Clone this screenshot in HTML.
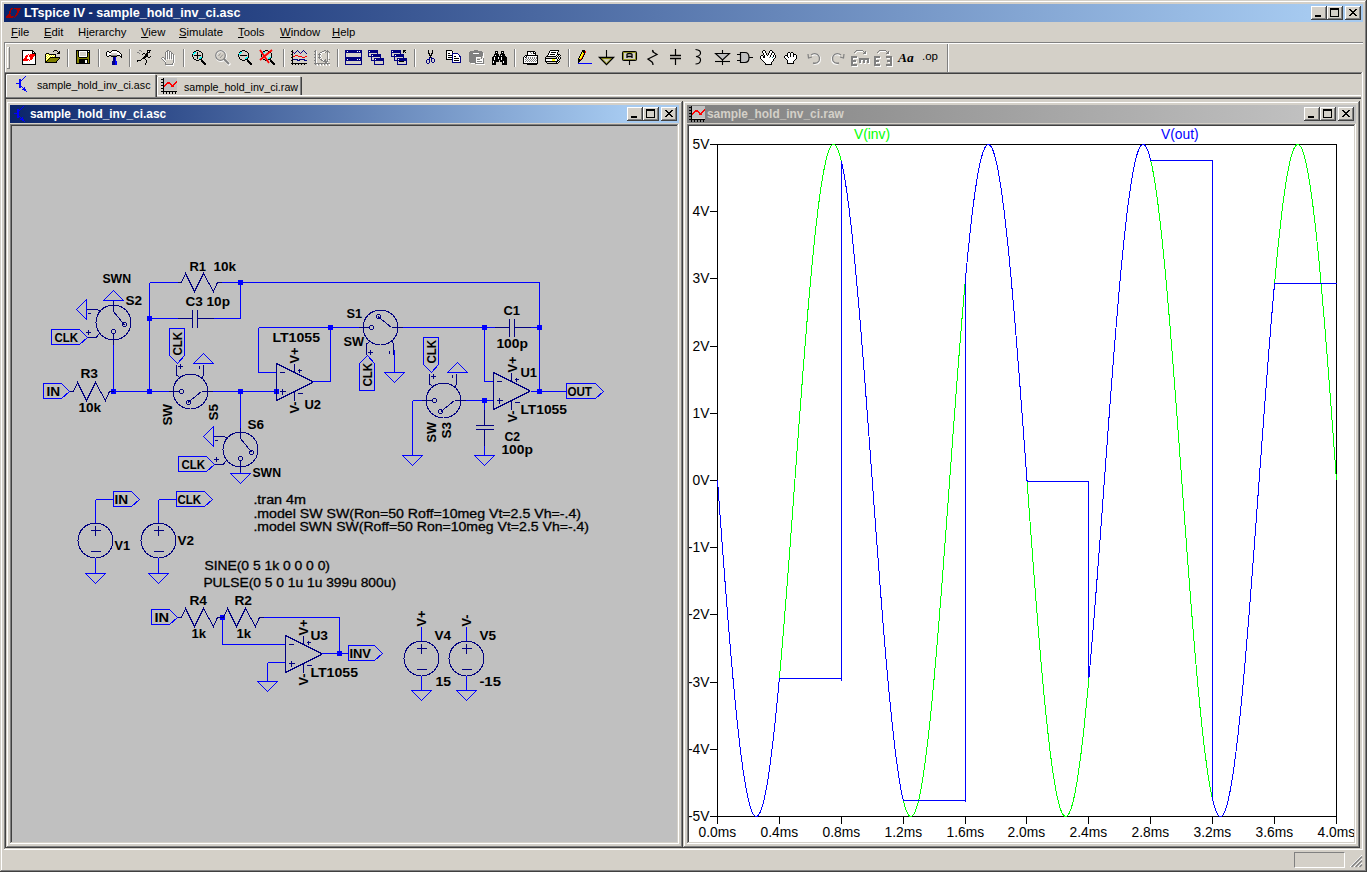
<!DOCTYPE html>
<html><head><meta charset="utf-8"><title>LTspice IV - sample_hold_inv_ci.asc</title>
<style>
html,body{margin:0;padding:0}
body{width:1367px;height:872px;overflow:hidden;background:#D4D0C8;position:relative;font-family:'Liberation Sans', sans-serif}
body>div{position:absolute}
u{text-decoration:underline}
</style></head><body>
<div style="left:0px;top:0px;width:1366px;height:1px;background:#D4D0C8;"></div><div style="left:0px;top:0px;width:1px;height:871px;background:#D4D0C8;"></div><div style="left:1px;top:1px;width:1364px;height:1px;background:#FFFFFF;"></div><div style="left:1px;top:1px;width:1px;height:869px;background:#FFFFFF;"></div><div style="left:0px;top:871px;width:1367px;height:1px;background:#404040;"></div><div style="left:1366px;top:0px;width:1px;height:872px;background:#404040;"></div><div style="left:1px;top:870px;width:1365px;height:1px;background:#808080;"></div><div style="left:1365px;top:1px;width:1px;height:870px;background:#808080;"></div><div style="left:4px;top:4px;width:1359px;height:18px;background:linear-gradient(to right,#0A246A 0px,#A6CAF0 1305px,#A6CAF0 100%);"></div><svg style="position:absolute;left:4px;top:8px" width="17" height="10" shape-rendering="crispEdges"><path d="M7 0h2v1h-2zM10 0h7v1h-7zM6 1h2v1h-2zM12 1h4v1h-4zM6 2h1v1h-1zM13 2h3v1h-3zM5 3h2v1h-2zM13 3h2v1h-2zM5 4h2v1h-2zM13 4h2v1h-2zM5 5h1v1h-1zM12 5h2v1h-2zM4 6h3v1h-3zM12 6h2v1h-2zM3 7h4v1h-4zM11 7h2v1h-2zM2 8h8v1h-8zM11 8h1v1h-1zM2 9h7v1h-7zM10 9h1v1h-1z" fill="#A00000"/></svg><div style="left:24px;top:7px;font:bold 12.6px 'Liberation Sans', sans-serif;color:#fff;white-space:pre;line-height:1;">LTspice IV - sample_hold_inv_ci.asc</div><div style="left:1311px;top:6px;width:15px;height:1px;background:#FFFFFF;"></div><div style="left:1311px;top:6px;width:1px;height:13px;background:#FFFFFF;"></div><div style="left:1311px;top:19px;width:16px;height:1px;background:#404040;"></div><div style="left:1326px;top:6px;width:1px;height:14px;background:#404040;"></div><div style="left:1312px;top:7px;width:13px;height:1px;background:#D4D0C8;"></div><div style="left:1312px;top:7px;width:1px;height:11px;background:#D4D0C8;"></div><div style="left:1312px;top:18px;width:14px;height:1px;background:#808080;"></div><div style="left:1325px;top:7px;width:1px;height:12px;background:#808080;"></div><div style="left:1313px;top:8px;width:12px;height:10px;background:#D4D0C8;"></div><div style="left:1315px;top:15px;width:6px;height:2px;background:#000;"></div><div style="left:1327px;top:6px;width:15px;height:1px;background:#FFFFFF;"></div><div style="left:1327px;top:6px;width:1px;height:13px;background:#FFFFFF;"></div><div style="left:1327px;top:19px;width:16px;height:1px;background:#404040;"></div><div style="left:1342px;top:6px;width:1px;height:14px;background:#404040;"></div><div style="left:1328px;top:7px;width:13px;height:1px;background:#D4D0C8;"></div><div style="left:1328px;top:7px;width:1px;height:11px;background:#D4D0C8;"></div><div style="left:1328px;top:18px;width:14px;height:1px;background:#808080;"></div><div style="left:1341px;top:7px;width:1px;height:12px;background:#808080;"></div><div style="left:1329px;top:8px;width:12px;height:10px;background:#D4D0C8;"></div><div style="left:1330px;top:8px;width:9px;height:9px;background:transparent;box-sizing:border-box;border:1px solid #000;border-top-width:2px"></div><div style="left:1345px;top:6px;width:15px;height:1px;background:#FFFFFF;"></div><div style="left:1345px;top:6px;width:1px;height:13px;background:#FFFFFF;"></div><div style="left:1345px;top:19px;width:16px;height:1px;background:#404040;"></div><div style="left:1360px;top:6px;width:1px;height:14px;background:#404040;"></div><div style="left:1346px;top:7px;width:13px;height:1px;background:#D4D0C8;"></div><div style="left:1346px;top:7px;width:1px;height:11px;background:#D4D0C8;"></div><div style="left:1346px;top:18px;width:14px;height:1px;background:#808080;"></div><div style="left:1359px;top:7px;width:1px;height:12px;background:#808080;"></div><div style="left:1347px;top:8px;width:12px;height:10px;background:#D4D0C8;"></div><svg style="position:absolute;left:1345px;top:6px" width="16" height="14"><path d="M4.5 3.5 L11 10 M5 3.5 L11.5 10 M11 3.5 L4.5 10 M11.5 3.5 L5 10" stroke="#000" stroke-width="1.1" shape-rendering="crispEdges"/></svg><div style="left:11px;top:27px;font:normal 11.3px 'Liberation Sans', sans-serif;color:#000;white-space:pre;line-height:1;text-underline-offset:1px"><u>F</u>ile</div><div style="left:44px;top:27px;font:normal 11.3px 'Liberation Sans', sans-serif;color:#000;white-space:pre;line-height:1;text-underline-offset:1px"><u>E</u>dit</div><div style="left:78px;top:27px;font:normal 11.3px 'Liberation Sans', sans-serif;color:#000;white-space:pre;line-height:1;text-underline-offset:1px">H<u>i</u>erarchy</div><div style="left:141px;top:27px;font:normal 11.3px 'Liberation Sans', sans-serif;color:#000;white-space:pre;line-height:1;text-underline-offset:1px"><u>V</u>iew</div><div style="left:179px;top:27px;font:normal 11.3px 'Liberation Sans', sans-serif;color:#000;white-space:pre;line-height:1;text-underline-offset:1px"><u>S</u>imulate</div><div style="left:238px;top:27px;font:normal 11.3px 'Liberation Sans', sans-serif;color:#000;white-space:pre;line-height:1;text-underline-offset:1px"><u>T</u>ools</div><div style="left:280px;top:27px;font:normal 11.3px 'Liberation Sans', sans-serif;color:#000;white-space:pre;line-height:1;text-underline-offset:1px"><u>W</u>indow</div><div style="left:332px;top:27px;font:normal 11.3px 'Liberation Sans', sans-serif;color:#000;white-space:pre;line-height:1;text-underline-offset:1px"><u>H</u>elp</div><div style="left:4px;top:42px;width:1359px;height:1px;background:#808080;"></div><div style="left:5px;top:43px;width:1358px;height:1px;background:#FFFFFF;"></div><div style="left:4px;top:42px;width:1px;height:30px;background:#808080;"></div><div style="left:5px;top:43px;width:1px;height:29px;background:#FFFFFF;"></div><div style="left:7px;top:47px;width:1px;height:22px;background:#FFFFFF;"></div><div style="left:7px;top:47px;width:3px;height:1px;background:#FFFFFF;"></div><div style="left:9px;top:47px;width:1px;height:22px;background:#808080;"></div><div style="left:7px;top:68px;width:3px;height:1px;background:#808080;"></div><div style="left:67px;top:49px;width:1px;height:18px;background:#808080;"></div><div style="left:68px;top:49px;width:1px;height:18px;background:#FFFFFF;"></div><div style="left:98px;top:49px;width:1px;height:18px;background:#808080;"></div><div style="left:99px;top:49px;width:1px;height:18px;background:#FFFFFF;"></div><div style="left:129px;top:49px;width:1px;height:18px;background:#808080;"></div><div style="left:130px;top:49px;width:1px;height:18px;background:#FFFFFF;"></div><div style="left:183px;top:49px;width:1px;height:18px;background:#808080;"></div><div style="left:184px;top:49px;width:1px;height:18px;background:#FFFFFF;"></div><div style="left:283px;top:49px;width:1px;height:18px;background:#808080;"></div><div style="left:284px;top:49px;width:1px;height:18px;background:#FFFFFF;"></div><div style="left:337px;top:49px;width:1px;height:18px;background:#808080;"></div><div style="left:338px;top:49px;width:1px;height:18px;background:#FFFFFF;"></div><div style="left:414px;top:49px;width:1px;height:18px;background:#808080;"></div><div style="left:415px;top:49px;width:1px;height:18px;background:#FFFFFF;"></div><div style="left:514px;top:49px;width:1px;height:18px;background:#808080;"></div><div style="left:515px;top:49px;width:1px;height:18px;background:#FFFFFF;"></div><div style="left:568px;top:49px;width:1px;height:18px;background:#808080;"></div><div style="left:569px;top:49px;width:1px;height:18px;background:#FFFFFF;"></div><div style="left:947px;top:44px;width:1px;height:28px;background:#808080;"></div><div style="left:948px;top:44px;width:1px;height:28px;background:#FFFFFF;"></div><svg style="position:absolute;left:20px;top:50px" width="16" height="15" shape-rendering="crispEdges"><path d="M2 0h11v1h-11zM2 1h1v1h-1zM12 1h2v1h-2zM2 2h1v1h-1zM12 2h1v1h-1zM14 2h1v1h-1zM2 3h1v1h-1zM12 3h4v1h-4zM2 4h1v1h-1zM15 4h1v1h-1zM2 5h1v1h-1zM15 5h1v1h-1zM2 6h1v1h-1zM15 6h1v1h-1zM2 7h1v1h-1zM15 7h1v1h-1zM2 8h1v1h-1zM15 8h1v1h-1zM2 9h1v1h-1zM15 9h1v1h-1zM2 10h1v1h-1zM15 10h1v1h-1zM2 11h1v1h-1zM15 11h1v1h-1zM2 12h1v1h-1zM15 12h1v1h-1zM2 13h1v1h-1zM15 13h1v1h-1zM2 14h14v1h-14z" fill="#000000"/><path d="M3 1h9v1h-9zM3 2h9v1h-9zM13 2h1v1h-1zM3 3h9v1h-9zM3 4h5v1h-5zM9 4h1v1h-1zM3 5h3v1h-3zM8 5h1v1h-1zM3 6h2v1h-2zM8 6h1v1h-1zM14 6h1v1h-1zM3 7h2v1h-2zM7 7h3v1h-3zM13 7h2v1h-2zM3 8h1v1h-1zM7 8h3v1h-3zM13 8h2v1h-2zM9 9h1v1h-1zM12 9h3v1h-3zM8 10h1v1h-1zM10 10h5v1h-5zM3 11h12v1h-12zM3 12h12v1h-12zM3 13h12v1h-12z" fill="#FFFFFF"/><path d="M8 4h1v1h-1zM10 4h5v1h-5zM6 5h2v1h-2zM9 5h6v1h-6zM5 6h3v1h-3zM9 6h5v1h-5zM5 7h2v1h-2zM10 7h3v1h-3zM4 8h3v1h-3zM10 8h3v1h-3zM3 9h6v1h-6zM10 9h2v1h-2zM3 10h5v1h-5zM9 10h1v1h-1z" fill="#FF0000"/></svg><svg style="position:absolute;left:42px;top:50px" width="18" height="13" shape-rendering="crispEdges"><path d="M12 0h3v1h-3zM11 1h1v1h-1zM15 1h1v1h-1zM17 1h1v1h-1zM16 2h2v1h-2zM4 3h3v1h-3zM15 3h3v1h-3zM3 4h1v1h-1zM7 4h7v1h-7zM3 5h1v1h-1zM13 5h1v1h-1zM3 6h1v1h-1zM13 6h1v1h-1zM3 7h1v1h-1zM8 7h10v1h-10zM3 8h1v1h-1zM7 8h1v1h-1zM17 8h1v1h-1zM3 9h1v1h-1zM6 9h1v1h-1zM16 9h1v1h-1zM3 10h1v1h-1zM5 10h1v1h-1zM15 10h1v1h-1zM3 11h2v1h-2zM14 11h1v1h-1zM3 12h12v1h-12z" fill="#000000"/><path d="M4 4h1v1h-1zM6 4h1v1h-1zM5 5h1v1h-1zM7 5h1v1h-1zM9 5h1v1h-1zM11 5h1v1h-1zM4 6h1v1h-1zM6 6h1v1h-1zM8 6h1v1h-1zM10 6h1v1h-1zM12 6h1v1h-1zM5 7h1v1h-1zM7 7h1v1h-1zM4 8h1v1h-1zM6 8h1v1h-1zM5 9h1v1h-1zM4 10h1v1h-1z" fill="#FFFF00"/><path d="M5 4h1v1h-1zM4 5h1v1h-1zM6 5h1v1h-1zM8 5h1v1h-1zM10 5h1v1h-1zM12 5h1v1h-1zM5 6h1v1h-1zM7 6h1v1h-1zM9 6h1v1h-1zM11 6h1v1h-1zM4 7h1v1h-1zM6 7h1v1h-1zM5 8h1v1h-1zM4 9h1v1h-1z" fill="#FFFFFF"/><path d="M8 8h9v1h-9zM7 9h9v1h-9zM6 10h9v1h-9zM5 11h9v1h-9z" fill="#808000"/></svg><svg style="position:absolute;left:73px;top:50px" width="17" height="14" shape-rendering="crispEdges"><path d="M3 0h14v1h-14zM3 1h1v1h-1zM5 1h1v1h-1zM14 1h1v1h-1zM16 1h1v1h-1zM3 2h1v1h-1zM5 2h1v1h-1zM14 2h3v1h-3zM3 3h1v1h-1zM5 3h1v1h-1zM14 3h1v1h-1zM16 3h1v1h-1zM3 4h1v1h-1zM5 4h1v1h-1zM14 4h1v1h-1zM16 4h1v1h-1zM3 5h1v1h-1zM5 5h1v1h-1zM14 5h1v1h-1zM16 5h1v1h-1zM3 6h1v1h-1zM5 6h1v1h-1zM14 6h1v1h-1zM16 6h1v1h-1zM3 7h1v1h-1zM6 7h8v1h-8zM16 7h1v1h-1zM3 8h1v1h-1zM16 8h1v1h-1zM3 9h1v1h-1zM6 9h9v1h-9zM16 9h1v1h-1zM3 10h1v1h-1zM6 10h6v1h-6zM14 10h1v1h-1zM16 10h1v1h-1zM3 11h1v1h-1zM6 11h6v1h-6zM14 11h1v1h-1zM16 11h1v1h-1zM3 12h1v1h-1zM6 12h6v1h-6zM14 12h1v1h-1zM16 12h1v1h-1zM3 13h14v1h-14z" fill="#000000"/><path d="M4 1h1v1h-1zM4 2h1v1h-1zM4 3h1v1h-1zM15 3h1v1h-1zM4 4h1v1h-1zM15 4h1v1h-1zM4 5h1v1h-1zM15 5h1v1h-1zM4 6h1v1h-1zM15 6h1v1h-1zM4 7h2v1h-2zM14 7h2v1h-2zM4 8h12v1h-12zM4 9h2v1h-2zM15 9h1v1h-1zM4 10h2v1h-2zM15 10h1v1h-1zM4 11h2v1h-2zM15 11h1v1h-1zM4 12h2v1h-2zM15 12h1v1h-1z" fill="#808000"/><path d="M6 1h8v1h-8zM15 1h1v1h-1zM6 2h1v1h-1zM13 2h1v1h-1zM6 3h1v1h-1zM13 3h1v1h-1zM6 4h1v1h-1zM13 4h1v1h-1zM6 5h1v1h-1zM13 5h1v1h-1zM6 6h8v1h-8zM12 10h2v1h-2zM12 11h2v1h-2zM12 12h2v1h-2z" fill="#FFFFFF"/><path d="M7 2h6v1h-6zM7 3h6v1h-6zM7 4h6v1h-6zM7 5h6v1h-6z" fill="#D4D0C8"/></svg><svg style="position:absolute;left:104px;top:50px" width="20" height="15" shape-rendering="crispEdges"><path d="M8 0h5v1h-5zM3 1h2v1h-2zM7 1h1v1h-1zM13 1h2v1h-2zM2 2h1v1h-1zM5 2h2v1h-2zM15 2h1v1h-1zM2 3h1v1h-1zM16 3h1v1h-1zM2 4h1v1h-1zM17 4h1v1h-1zM2 5h1v1h-1zM5 5h2v1h-2zM13 5h3v1h-3zM17 5h1v1h-1zM3 6h2v1h-2zM7 6h6v1h-6zM16 6h2v1h-2zM17 7h1v1h-1z" fill="#000000"/><path d="M8 1h5v1h-5zM3 2h2v1h-2zM7 2h8v1h-8zM3 3h4v1h-4zM13 3h3v1h-3zM3 4h4v1h-4zM13 4h4v1h-4zM3 5h2v1h-2zM16 5h1v1h-1z" fill="#FFFFFF"/><path d="M7 3h6v1h-6zM7 4h6v1h-6z" fill="#D4D0C8"/><path d="M7 5h6v1h-6z" fill="#808080"/><path d="M9 7h2v1h-2zM9 8h2v1h-2zM9 9h2v1h-2zM9 10h2v1h-2zM8 11h3v1h-3zM8 12h3v1h-3zM8 13h3v1h-3zM8 14h3v1h-3z" fill="#000080"/><path d="M11 7h1v1h-1zM11 8h1v1h-1zM11 9h1v1h-1zM11 10h1v1h-1zM11 11h2v1h-2zM11 12h2v1h-2zM11 13h2v1h-2zM11 14h2v1h-2z" fill="#0000FF"/></svg><svg style="position:absolute;left:134px;top:50px" width="20" height="15" shape-rendering="crispEdges"><path d="M5 0h2v1h-2zM7 1h1v1h-1zM3 2h2v1h-2zM5 3h1v1h-1z" fill="#808080"/><path d="M13 0h4v1h-4zM13 1h1v1h-1zM15 1h1v1h-1zM13 2h3v1h-3zM9 3h2v1h-2zM12 3h2v1h-2zM8 4h1v1h-1zM11 4h3v1h-3zM11 5h3v1h-3zM10 6h4v1h-4zM16 6h1v1h-1zM9 7h3v1h-3zM14 7h2v1h-2zM8 8h3v1h-3zM7 9h1v1h-1zM11 9h1v1h-1zM3 10h4v1h-4zM12 10h1v1h-1zM3 11h1v1h-1zM12 11h1v1h-1zM12 12h1v1h-1zM11 13h1v1h-1zM11 14h1v1h-1z" fill="#000000"/><path d="M14 1h1v1h-1z" fill="#FFFFFF"/></svg><svg style="position:absolute;left:158px;top:50px" width="18" height="16" shape-rendering="crispEdges"><path d="M9 0h2v1h-2zM8 1h2v1h-2zM11 1h2v1h-2zM7 2h1v1h-1zM9 2h1v1h-1zM11 2h1v1h-1zM13 2h1v1h-1zM7 3h1v1h-1zM9 3h1v1h-1zM11 3h1v1h-1zM13 3h2v1h-2zM7 4h1v1h-1zM9 4h1v1h-1zM11 4h1v1h-1zM13 4h1v1h-1zM15 4h1v1h-1zM7 5h1v1h-1zM9 5h1v1h-1zM11 5h1v1h-1zM13 5h1v1h-1zM15 5h1v1h-1zM7 6h1v1h-1zM9 6h1v1h-1zM11 6h1v1h-1zM13 6h1v1h-1zM15 6h1v1h-1zM4 7h2v1h-2zM7 7h1v1h-1zM9 7h1v1h-1zM11 7h1v1h-1zM13 7h1v1h-1zM15 7h1v1h-1zM3 8h1v1h-1zM6 8h2v1h-2zM9 8h1v1h-1zM11 8h1v1h-1zM13 8h1v1h-1zM15 8h1v1h-1zM4 9h1v1h-1zM7 9h1v1h-1zM15 9h1v1h-1zM5 10h1v1h-1zM15 10h1v1h-1zM6 11h1v1h-1zM15 11h1v1h-1zM7 12h1v1h-1zM15 12h1v1h-1zM7 13h1v1h-1zM14 13h1v1h-1zM7 14h8v1h-8z" fill="#808080"/><path d="M10 1h1v1h-1zM8 2h1v1h-1zM10 2h1v1h-1zM12 2h1v1h-1zM8 3h1v1h-1zM10 3h1v1h-1zM12 3h1v1h-1zM8 4h1v1h-1zM10 4h1v1h-1zM12 4h1v1h-1zM14 4h1v1h-1zM8 5h1v1h-1zM10 5h1v1h-1zM12 5h1v1h-1zM14 5h1v1h-1zM16 5h1v1h-1zM8 6h1v1h-1zM10 6h1v1h-1zM12 6h1v1h-1zM14 6h1v1h-1zM16 6h1v1h-1zM8 7h1v1h-1zM10 7h1v1h-1zM12 7h1v1h-1zM14 7h1v1h-1zM16 7h1v1h-1zM4 8h2v1h-2zM8 8h1v1h-1zM10 8h1v1h-1zM12 8h1v1h-1zM14 8h1v1h-1zM16 8h1v1h-1zM5 9h1v1h-1zM8 9h1v1h-1zM10 9h1v1h-1zM12 9h1v1h-1zM14 9h1v1h-1zM16 9h1v1h-1zM6 10h1v1h-1zM16 10h1v1h-1zM7 11h1v1h-1zM16 11h1v1h-1zM16 12h1v1h-1zM15 13h1v1h-1zM15 14h1v1h-1zM8 15h8v1h-8z" fill="#FFFFFF"/></svg><svg style="position:absolute;left:190px;top:50px" width="16" height="15" shape-rendering="crispEdges"><path d="M6 0h3v1h-3zM4 1h2v1h-2zM9 1h2v1h-2zM3 2h1v1h-1zM7 2h1v1h-1zM11 2h1v1h-1zM7 3h1v1h-1zM12 3h1v1h-1zM2 4h1v1h-1zM7 4h1v1h-1zM12 4h1v1h-1zM2 5h1v1h-1zM4 5h7v1h-7zM12 5h1v1h-1zM2 6h1v1h-1zM7 6h1v1h-1zM12 6h1v1h-1zM3 7h1v1h-1zM7 7h1v1h-1zM12 7h1v1h-1zM3 8h1v1h-1zM7 8h1v1h-1zM11 8h1v1h-1zM4 9h2v1h-2zM9 9h3v1h-3zM6 10h3v1h-3zM11 10h2v1h-2zM11 11h3v1h-3zM12 12h3v1h-3zM13 13h3v1h-3zM14 14h2v1h-2z" fill="#000000"/><path d="M4 2h2v1h-2zM3 3h2v1h-2zM3 4h1v1h-1zM10 7h2v1h-2zM9 8h2v1h-2z" fill="#00FFFF"/></svg><svg style="position:absolute;left:215px;top:50px;overflow:visible" width="16" height="16" viewBox="0 0 16 16"><circle cx="6" cy="6" r="5" fill="none" stroke="#fff" stroke-width="2"/><path d="M10 10 L15 15" stroke="#fff" stroke-width="2.8"/><circle cx="5.5" cy="5.5" r="4.8" fill="none" stroke="#808080" stroke-width="1.3"/><path d="M9 9 L14 14" stroke="#808080" stroke-width="2"/><path d="M3.5 6 L5.5 3.5 M5 8 L8 4.5" stroke="#808080" stroke-width="0.8"/></svg><svg style="position:absolute;left:236px;top:50px" width="16" height="15" shape-rendering="crispEdges"><path d="M6 0h3v1h-3zM4 1h2v1h-2zM9 1h2v1h-2zM3 2h1v1h-1zM11 2h1v1h-1zM12 3h1v1h-1zM2 4h1v1h-1zM12 4h1v1h-1zM2 5h1v1h-1zM4 5h7v1h-7zM12 5h1v1h-1zM2 6h1v1h-1zM12 6h1v1h-1zM3 7h1v1h-1zM12 7h1v1h-1zM3 8h1v1h-1zM11 8h1v1h-1zM4 9h2v1h-2zM9 9h3v1h-3zM6 10h3v1h-3zM11 10h2v1h-2zM11 11h3v1h-3zM12 12h3v1h-3zM13 13h3v1h-3zM14 14h2v1h-2z" fill="#000000"/><path d="M4 2h2v1h-2zM3 3h2v1h-2zM3 4h1v1h-1zM10 7h2v1h-2zM9 8h2v1h-2z" fill="#00FFFF"/></svg><svg style="position:absolute;left:259px;top:50px" width="16" height="15" shape-rendering="crispEdges"><path d="M6 0h3v1h-3zM4 1h2v1h-2zM9 1h2v1h-2zM3 2h1v1h-1zM11 2h1v1h-1zM12 3h1v1h-1zM2 4h1v1h-1zM12 4h1v1h-1zM2 5h1v1h-1zM12 5h1v1h-1zM2 6h1v1h-1zM12 6h1v1h-1zM3 7h1v1h-1zM12 7h1v1h-1zM3 8h1v1h-1zM11 8h1v1h-1zM4 9h2v1h-2zM9 9h3v1h-3zM6 10h3v1h-3zM11 10h2v1h-2zM11 11h3v1h-3zM12 12h3v1h-3zM13 13h3v1h-3zM14 14h2v1h-2z" fill="#000000"/><path d="M4 2h2v1h-2zM3 3h2v1h-2zM3 4h1v1h-1zM10 7h2v1h-2zM9 8h2v1h-2z" fill="#00FFFF"/></svg><svg style="position:absolute;left:259px;top:49px;overflow:visible" width="16" height="16" viewBox="0 0 16 16"><path d="M1 1 L10 14 M13 1 L1 11" stroke="#f00" stroke-width="1.8"/></svg><svg style="position:absolute;left:289px;top:50px" width="19" height="15" shape-rendering="crispEdges"><path d="M3 0h1v1h-1zM2 1h2v1h-2zM3 2h1v1h-1zM3 3h1v1h-1zM2 4h2v1h-2zM3 5h1v1h-1zM3 6h1v1h-1zM2 7h2v1h-2zM3 8h1v1h-1zM3 9h1v1h-1zM2 10h2v1h-2zM3 11h1v1h-1zM3 12h1v1h-1zM2 13h16v1h-16zM3 14h1v1h-1zM6 14h1v1h-1zM9 14h1v1h-1zM12 14h1v1h-1zM15 14h1v1h-1z" fill="#000000"/><path d="M8 0h1v1h-1zM14 0h1v1h-1zM7 1h1v1h-1zM9 1h1v1h-1zM13 1h1v1h-1zM15 1h1v1h-1zM6 2h1v1h-1zM10 2h1v1h-1zM12 2h1v1h-1zM16 2h1v1h-1zM5 3h1v1h-1zM17 3h1v1h-1zM4 9h5v1h-5zM10 9h6v1h-6zM8 10h3v1h-3zM15 10h3v1h-3z" fill="#000080"/><path d="M4 2h1v1h-1zM11 3h1v1h-1z" fill="#800080"/><path d="M6 5h3v1h-3zM4 6h2v1h-2zM9 6h4v1h-4zM16 6h2v1h-2zM13 7h3v1h-3z" fill="#FF0000"/></svg><svg style="position:absolute;left:312px;top:50px" width="19" height="16" shape-rendering="crispEdges"><path d="M3 0h1v1h-1zM12 0h2v1h-2zM15 0h1v1h-1zM2 1h2v1h-2zM10 1h2v1h-2zM14 1h3v1h-3zM3 2h1v1h-1zM8 2h2v1h-2zM13 2h1v1h-1zM15 2h1v1h-1zM17 2h1v1h-1zM3 3h1v1h-1zM7 3h1v1h-1zM15 3h1v1h-1zM2 4h2v1h-2zM6 4h3v1h-3zM15 4h1v1h-1zM3 5h1v1h-1zM7 5h1v1h-1zM15 5h1v1h-1zM3 6h1v1h-1zM7 6h1v1h-1zM15 6h1v1h-1zM2 7h2v1h-2zM6 7h3v1h-3zM15 7h1v1h-1zM3 8h1v1h-1zM7 8h1v1h-1zM15 8h1v1h-1zM3 9h1v1h-1zM8 9h2v1h-2zM13 9h1v1h-1zM15 9h1v1h-1zM17 9h1v1h-1zM2 10h2v1h-2zM9 10h2v1h-2zM12 10h2v1h-2zM15 10h1v1h-1zM3 11h1v1h-1zM11 11h5v1h-5zM3 12h1v1h-1zM13 12h2v1h-2zM2 13h16v1h-16zM3 14h1v1h-1zM6 14h1v1h-1zM9 14h1v1h-1zM12 14h1v1h-1zM15 14h1v1h-1z" fill="#808080"/><path d="M4 1h1v1h-1zM4 2h1v1h-1zM10 2h3v1h-3zM4 3h1v1h-1zM8 3h2v1h-2zM16 3h1v1h-1zM4 4h1v1h-1zM9 4h1v1h-1zM16 4h1v1h-1zM4 5h1v1h-1zM8 5h1v1h-1zM16 5h1v1h-1zM4 6h1v1h-1zM8 6h1v1h-1zM16 6h1v1h-1zM4 7h1v1h-1zM9 7h1v1h-1zM16 7h1v1h-1zM4 8h1v1h-1zM8 8h1v1h-1zM16 8h1v1h-1zM4 9h1v1h-1zM10 9h1v1h-1zM4 10h1v1h-1zM11 10h1v1h-1zM16 10h1v1h-1zM4 11h1v1h-1zM4 12h1v1h-1zM15 12h1v1h-1zM5 14h1v1h-1zM8 14h1v1h-1zM11 14h1v1h-1zM14 14h1v1h-1zM17 14h1v1h-1zM5 15h1v1h-1zM8 15h1v1h-1zM11 15h1v1h-1zM14 15h1v1h-1zM17 15h1v1h-1z" fill="#FFFFFF"/></svg><svg style="position:absolute;left:345px;top:50px;overflow:visible" width="17" height="15" viewBox="0 0 17 15" shape-rendering="crispEdges"><rect x="0.5" y="0.5" width="16" height="7" fill="#d4d0c8" stroke="#000080"/><rect x="0" y="0" width="17" height="3" fill="#000080"/><rect x="0.5" y="8.5" width="16" height="6" fill="#d4d0c8" stroke="#000080"/><rect x="0" y="8" width="17" height="2.5" fill="#000080"/><rect x="2" y="1" width="1" height="1" fill="#fff"/><rect x="12" y="1" width="1" height="1" fill="#fff"/><rect x="14" y="1" width="1" height="1" fill="#fff"/><rect x="2" y="9" width="1" height="1" fill="#fff"/><rect x="12" y="9" width="1" height="1" fill="#fff"/><rect x="14" y="9" width="1" height="1" fill="#fff"/></svg><svg style="position:absolute;left:368px;top:50px;overflow:visible" width="17" height="15" viewBox="0 0 17 15" shape-rendering="crispEdges"><rect x="0.5" y="0.5" width="9" height="6" fill="#d4d0c8" stroke="#000080"/><rect x="0" y="0" width="10" height="2.5" fill="#000080"/><rect x="1" y="1" width="1" height="1" fill="#fff"/><rect x="3.5" y="4.5" width="9" height="6" fill="#d4d0c8" stroke="#000080"/><rect x="3" y="4" width="10" height="2.5" fill="#000080"/><rect x="4" y="5" width="1" height="1" fill="#fff"/><rect x="6.5" y="8.5" width="9" height="6" fill="#d4d0c8" stroke="#000080"/><rect x="6" y="8" width="10" height="2.5" fill="#000080"/><rect x="7" y="9" width="1" height="1" fill="#fff"/></svg><svg style="position:absolute;left:391px;top:50px;overflow:visible" width="17" height="15" viewBox="0 0 17 15" shape-rendering="crispEdges"><rect x="0.5" y="0.5" width="9" height="6" fill="#d4d0c8" stroke="#000080"/><rect x="0" y="0" width="10" height="2.5" fill="#000080"/><rect x="1" y="1" width="1" height="1" fill="#fff"/><rect x="3.5" y="4.5" width="9" height="6" fill="#d4d0c8" stroke="#000080"/><rect x="3" y="4" width="10" height="2.5" fill="#000080"/><rect x="4" y="5" width="1" height="1" fill="#fff"/><rect x="6.5" y="8.5" width="9" height="6" fill="#d4d0c8" stroke="#000080"/><rect x="6" y="8" width="10" height="2.5" fill="#000080"/><rect x="7" y="9" width="1" height="1" fill="#fff"/><rect x="8" y="11" width="5" height="1" fill="#000"/><path d="M12.5 0.5 L15.5 3.5 M12.5 0.5 V3 M12.5 0.5 H15" stroke="#000" stroke-width="1.2"/></svg><svg style="position:absolute;left:423px;top:50px" width="12" height="14" shape-rendering="crispEdges"><path d="M5 0h1v1h-1zM9 0h1v1h-1zM5 1h1v1h-1zM9 1h1v1h-1zM5 2h1v1h-1zM9 2h1v1h-1zM5 3h2v1h-2zM8 3h2v1h-2zM6 4h1v1h-1zM8 4h1v1h-1zM6 5h3v1h-3zM7 6h1v1h-1zM7 7h1v1h-1z" fill="#000000"/><path d="M6 7h1v1h-1zM8 7h1v1h-1zM6 8h1v1h-1zM8 8h3v1h-3zM4 9h3v1h-3zM8 9h1v1h-1zM11 9h1v1h-1zM3 10h1v1h-1zM6 10h1v1h-1zM8 10h1v1h-1zM11 10h1v1h-1zM3 11h1v1h-1zM6 11h1v1h-1zM8 11h1v1h-1zM11 11h1v1h-1zM3 12h1v1h-1zM6 12h1v1h-1zM9 12h2v1h-2zM4 13h2v1h-2z" fill="#000080"/></svg><svg style="position:absolute;left:444px;top:50px" width="17" height="13" shape-rendering="crispEdges"><path d="M2 0h6v1h-6zM2 1h1v1h-1zM8 1h1v1h-1zM2 2h1v1h-1zM8 2h1v1h-1zM2 3h1v1h-1zM4 3h2v1h-2zM2 4h1v1h-1zM2 5h1v1h-1zM4 5h4v1h-4zM2 6h1v1h-1zM10 6h2v1h-2zM2 7h1v1h-1zM4 7h4v1h-4zM2 8h1v1h-1zM10 8h5v1h-5zM2 9h6v1h-6zM10 10h5v1h-5z" fill="#000000"/><path d="M3 1h5v1h-5zM3 2h5v1h-5zM9 2h1v1h-1zM3 3h1v1h-1zM6 3h2v1h-2zM3 4h5v1h-5zM9 4h5v1h-5zM3 5h1v1h-1zM9 5h6v1h-6zM3 6h5v1h-5zM9 6h1v1h-1zM12 6h3v1h-3zM3 7h1v1h-1zM9 7h7v1h-7zM3 8h5v1h-5zM9 8h1v1h-1zM15 8h1v1h-1zM9 9h7v1h-7zM9 10h1v1h-1zM15 10h1v1h-1zM9 11h7v1h-7z" fill="#FFFFFF"/><path d="M8 3h6v1h-6zM8 4h1v1h-1zM14 4h1v1h-1zM8 5h1v1h-1zM15 5h1v1h-1zM8 6h1v1h-1zM15 6h2v1h-2zM8 7h1v1h-1zM16 7h1v1h-1zM8 8h1v1h-1zM16 8h1v1h-1zM8 9h1v1h-1zM16 9h1v1h-1zM8 10h1v1h-1zM16 10h1v1h-1zM8 11h1v1h-1zM16 11h1v1h-1zM8 12h9v1h-9z" fill="#000080"/></svg><svg style="position:absolute;left:466px;top:50px" width="19" height="15" shape-rendering="crispEdges"><path d="M8 0h4v1h-4zM4 1h12v1h-12zM3 2h14v1h-14zM3 3h4v1h-4zM13 3h4v1h-4zM3 4h14v1h-14zM3 5h14v1h-14zM3 6h13v1h-13zM3 7h7v1h-7zM15 7h1v1h-1zM3 8h7v1h-7zM15 8h1v1h-1zM17 8h1v1h-1zM3 9h7v1h-7zM11 9h3v1h-3zM17 9h1v1h-1zM3 10h7v1h-7zM17 10h1v1h-1zM3 11h7v1h-7zM11 11h5v1h-5zM17 11h1v1h-1zM4 12h6v1h-6zM17 12h1v1h-1zM9 13h9v1h-9z" fill="#808080"/><path d="M7 3h6v1h-6zM17 3h1v1h-1zM17 4h1v1h-1zM17 5h1v1h-1zM17 6h1v1h-1zM10 7h5v1h-5zM17 7h1v1h-1zM10 8h1v1h-1zM16 8h1v1h-1zM10 9h1v1h-1zM14 9h3v1h-3zM10 10h7v1h-7zM10 11h1v1h-1zM16 11h1v1h-1zM10 12h7v1h-7zM5 13h4v1h-4zM10 14h9v1h-9z" fill="#FFFFFF"/><path d="M11 8h4v1h-4z" fill="#D4D0C8"/></svg><svg style="position:absolute;left:489px;top:51px" width="18" height="14" shape-rendering="crispEdges"><path d="M6 0h3v1h-3zM12 0h3v1h-3zM6 1h1v1h-1zM8 1h1v1h-1zM12 1h1v1h-1zM14 1h1v1h-1zM6 2h3v1h-3zM12 2h3v1h-3zM5 3h5v1h-5zM11 3h5v1h-5zM5 4h1v1h-1zM7 4h3v1h-3zM11 4h1v1h-1zM13 4h3v1h-3zM4 5h13v1h-13zM3 6h2v1h-2zM6 6h3v1h-3zM10 6h2v1h-2zM13 6h5v1h-5zM3 7h2v1h-2zM6 7h3v1h-3zM10 7h2v1h-2zM13 7h5v1h-5zM3 8h2v1h-2zM6 8h6v1h-6zM13 8h5v1h-5zM3 9h7v1h-7zM11 9h7v1h-7zM3 10h1v1h-1zM5 10h5v1h-5zM11 10h3v1h-3zM15 10h3v1h-3zM3 11h1v1h-1zM5 11h2v1h-2zM13 11h1v1h-1zM15 11h3v1h-3zM3 12h4v1h-4zM13 12h5v1h-5zM3 13h4v1h-4zM13 13h5v1h-5z" fill="#000000"/><path d="M7 1h1v1h-1zM13 1h1v1h-1zM6 4h1v1h-1zM12 4h1v1h-1zM5 6h1v1h-1zM9 6h1v1h-1zM12 6h1v1h-1zM5 7h1v1h-1zM9 7h1v1h-1zM12 7h1v1h-1zM5 8h1v1h-1zM12 8h1v1h-1zM4 10h1v1h-1zM14 10h1v1h-1zM4 11h1v1h-1zM14 11h1v1h-1z" fill="#FFFFFF"/></svg><svg style="position:absolute;left:520px;top:51px" width="18" height="14" shape-rendering="crispEdges"><path d="M7 0h8v1h-8zM7 1h1v1h-1zM13 1h1v1h-1zM15 1h1v1h-1zM7 2h1v1h-1zM13 2h3v1h-3zM7 3h1v1h-1zM15 3h1v1h-1zM5 4h13v1h-13zM4 5h1v1h-1zM6 5h1v1h-1zM17 5h1v1h-1zM3 6h1v1h-1zM5 6h1v1h-1zM17 6h1v1h-1zM3 7h1v1h-1zM17 7h1v1h-1zM3 8h1v1h-1zM17 8h1v1h-1zM3 9h1v1h-1zM17 9h1v1h-1zM3 10h1v1h-1zM17 10h1v1h-1zM3 11h1v1h-1zM17 11h1v1h-1zM3 12h15v1h-15zM7 13h10v1h-10z" fill="#000000"/><path d="M8 1h2v1h-2zM11 1h2v1h-2zM14 1h1v1h-1zM8 2h3v1h-3zM12 2h1v1h-1zM8 3h7v1h-7zM5 5h1v1h-1zM7 5h10v1h-10zM4 6h1v1h-1zM7 6h1v1h-1zM9 6h1v1h-1zM11 6h1v1h-1zM13 6h1v1h-1zM15 6h1v1h-1zM4 7h2v1h-2zM7 7h1v1h-1zM9 7h1v1h-1zM11 7h1v1h-1zM13 7h1v1h-1zM15 7h1v1h-1zM4 8h1v1h-1zM6 8h1v1h-1zM8 8h1v1h-1zM10 8h1v1h-1zM12 8h1v1h-1zM14 8h1v1h-1zM16 8h1v1h-1zM4 9h2v1h-2zM7 9h1v1h-1zM9 9h1v1h-1zM11 9h1v1h-1zM13 9h1v1h-1zM15 9h1v1h-1zM4 10h1v1h-1zM6 10h1v1h-1zM8 10h1v1h-1zM10 10h1v1h-1zM12 10h1v1h-1zM14 10h1v1h-1zM16 10h1v1h-1zM4 11h13v1h-13z" fill="#FFFFFF"/><path d="M10 1h1v1h-1zM11 2h1v1h-1zM6 6h1v1h-1zM8 6h1v1h-1zM10 6h1v1h-1zM12 6h1v1h-1zM14 6h1v1h-1zM16 6h1v1h-1zM6 7h1v1h-1zM8 7h1v1h-1zM10 7h1v1h-1zM12 7h1v1h-1zM14 7h1v1h-1zM16 7h1v1h-1zM5 8h1v1h-1zM7 8h1v1h-1zM9 8h1v1h-1zM11 8h1v1h-1zM13 8h1v1h-1zM15 8h1v1h-1zM6 9h1v1h-1zM8 9h1v1h-1zM10 9h1v1h-1zM12 9h1v1h-1zM14 9h1v1h-1zM16 9h1v1h-1zM5 10h1v1h-1zM7 10h1v1h-1zM9 10h1v1h-1zM11 10h1v1h-1zM13 10h1v1h-1zM15 10h1v1h-1z" fill="#808080"/></svg><svg style="position:absolute;left:542px;top:50px" width="19" height="14" shape-rendering="crispEdges"><path d="M8 0h9v1h-9zM7 1h1v1h-1zM16 1h1v1h-1zM7 2h1v1h-1zM9 2h5v1h-5zM15 2h1v1h-1zM6 3h1v1h-1zM15 3h1v1h-1zM6 4h1v1h-1zM8 4h5v1h-5zM15 4h3v1h-3zM5 5h1v1h-1zM14 5h1v1h-1zM16 5h1v1h-1zM18 5h1v1h-1zM4 6h10v1h-10zM15 6h1v1h-1zM17 6h1v1h-1zM3 7h1v1h-1zM14 7h1v1h-1zM16 7h1v1h-1zM18 7h1v1h-1zM3 8h12v1h-12zM16 8h1v1h-1zM18 8h1v1h-1zM3 9h1v1h-1zM15 9h1v1h-1zM17 9h1v1h-1zM3 10h1v1h-1zM15 10h2v1h-2zM3 11h13v1h-13zM17 11h1v1h-1zM4 12h1v1h-1zM14 12h1v1h-1zM16 12h1v1h-1zM5 13h11v1h-11z" fill="#000000"/><path d="M8 1h8v1h-8zM8 2h1v1h-1zM14 2h1v1h-1zM7 3h8v1h-8zM7 4h1v1h-1zM13 4h2v1h-2zM6 5h8v1h-8zM15 5h1v1h-1zM17 5h1v1h-1zM14 6h1v1h-1zM16 6h1v1h-1zM15 7h1v1h-1zM17 7h1v1h-1zM15 8h1v1h-1zM4 9h6v1h-6zM13 9h2v1h-2zM16 9h1v1h-1zM4 10h6v1h-6zM13 10h2v1h-2zM16 11h1v1h-1zM15 12h1v1h-1z" fill="#FFFFFF"/><path d="M4 7h10v1h-10zM5 12h9v1h-9z" fill="#D4D0C8"/><path d="M10 9h3v1h-3zM10 10h3v1h-3z" fill="#FFFF00"/></svg><svg style="position:absolute;left:575px;top:50px" width="17" height="14" shape-rendering="crispEdges"><path d="M7 0h3v1h-3zM7 1h3v1h-3zM6 2h1v1h-1zM8 2h2v1h-2zM6 3h1v1h-1zM9 3h1v1h-1zM5 4h1v1h-1zM9 4h1v1h-1zM5 5h1v1h-1zM8 5h1v1h-1zM4 6h1v1h-1zM8 6h1v1h-1zM4 7h1v1h-1zM7 7h1v1h-1zM3 8h1v1h-1zM7 8h1v1h-1zM3 9h2v1h-2zM6 9h1v1h-1zM3 10h3v1h-3zM3 11h2v1h-2zM3 12h1v1h-1z" fill="#000000"/><path d="M10 1h1v1h-1zM10 2h1v1h-1zM8 4h1v1h-1zM7 6h1v1h-1zM6 8h1v1h-1zM5 9h1v1h-1z" fill="#FF0000"/><path d="M7 2h1v1h-1zM7 3h2v1h-2zM6 4h2v1h-2zM6 5h2v1h-2zM5 6h2v1h-2zM5 7h2v1h-2zM4 8h2v1h-2z" fill="#FFFF00"/><path d="M3 13h14v1h-14z" fill="#0000FF"/></svg><svg style="position:absolute;left:599px;top:50px;overflow:visible" width="15" height="16" viewBox="0 0 15 16"><path d="M7.5 0 V7" stroke="#000" stroke-width="1.1"/><path d="M0.5 7.5 H14.5 L7.5 14.5 Z" fill="#d4d0c8" stroke="#000" stroke-width="1.3"/><path d="M2.8 8.6 H12.2 L7.5 13.2 Z" fill="none" stroke="#808000" stroke-width="1"/></svg><svg style="position:absolute;left:622px;top:51px;overflow:visible" width="15" height="15" viewBox="0 0 15 15"><rect x="0.5" y="0.5" width="14" height="9" rx="1.5" fill="#d4d0c8" stroke="#000" stroke-width="1.1"/><rect x="1.5" y="1.5" width="12" height="7" fill="none" stroke="#808000" stroke-width="0.8"/><path d="M5 7 V3.5 Q5 2.5 7.5 2.5 Q10 2.5 10 3.5 V7 M5 5.5 H10" fill="none" stroke="#000" stroke-width="1.3"/><path d="M7.5 10 V14" stroke="#000" stroke-width="1.1"/></svg><svg style="position:absolute;left:647px;top:50px;overflow:visible" width="12" height="16" viewBox="0 0 12 16"><path d="M5 0.5 Q7 1 6 2 L10 4.5 L1 9 L5 12 Q6 13 6 15" fill="none" stroke="#000" stroke-width="1.3"/></svg><svg style="position:absolute;left:670px;top:49px;overflow:visible" width="11" height="16" viewBox="0 0 11 16"><path d="M5.5 0 V6 M5.5 10 V16" stroke="#000" stroke-width="1.2"/><path d="M0 6.5 H11 M0 9.5 H11" stroke="#000" stroke-width="1.6"/></svg><svg style="position:absolute;left:695px;top:49px;overflow:visible" width="7" height="16" viewBox="0 0 7 16"><path d="M0.5 0.5 Q6 1 5.5 4.5 Q5 7 1 7.5 Q6 8 5.5 11.5 Q5 15 0.5 15" fill="none" stroke="#000" stroke-width="1.2"/></svg><svg style="position:absolute;left:715px;top:50px;overflow:visible" width="15" height="15" viewBox="0 0 15 15"><path d="M7.5 0 V15" stroke="#000" stroke-width="1.1"/><path d="M0.5 3.5 H14.5 L7.5 10 Z" fill="#c0c0c0" stroke="#000" stroke-width="1.1"/><path d="M0 11.5 H15" stroke="#000" stroke-width="1.1"/></svg><svg style="position:absolute;left:737px;top:52px;overflow:visible" width="16" height="11" viewBox="0 0 16 11"><path d="M3.5 0.5 H8 Q12 0.5 12 5.5 Q12 10.5 8 10.5 H3.5 Z" fill="#c0c0c0" stroke="#000" stroke-width="1.2"/><path d="M0 2.5 H3 M0 8.5 H3 M12 5.5 H16" stroke="#000" stroke-width="1.1"/></svg><svg style="position:absolute;left:758px;top:50px" width="18" height="15" shape-rendering="crispEdges"><path d="M5 0h2v1h-2zM12 0h2v1h-2zM4 1h1v1h-1zM7 1h1v1h-1zM11 1h1v1h-1zM14 1h1v1h-1zM4 2h1v1h-1zM7 2h1v1h-1zM11 2h1v1h-1zM14 2h2v1h-2zM5 3h1v1h-1zM8 3h1v1h-1zM10 3h1v1h-1zM13 3h1v1h-1zM16 3h1v1h-1zM5 4h1v1h-1zM8 4h1v1h-1zM10 4h1v1h-1zM13 4h1v1h-1zM16 4h1v1h-1zM3 5h2v1h-2zM6 5h1v1h-1zM9 5h1v1h-1zM12 5h1v1h-1zM15 5h1v1h-1zM17 5h1v1h-1zM2 6h1v1h-1zM5 6h2v1h-2zM12 6h1v1h-1zM15 6h1v1h-1zM17 6h1v1h-1zM2 7h1v1h-1zM5 7h2v1h-2zM17 7h1v1h-1zM2 8h1v1h-1zM16 8h1v1h-1zM3 9h1v1h-1zM15 9h1v1h-1zM4 10h1v1h-1zM15 10h1v1h-1zM5 11h1v1h-1zM14 11h1v1h-1zM6 12h1v1h-1zM13 12h1v1h-1zM7 13h1v1h-1zM13 13h1v1h-1zM7 14h7v1h-7z" fill="#000000"/><path d="M5 1h2v1h-2zM12 1h2v1h-2zM5 2h2v1h-2zM12 2h2v1h-2zM6 3h2v1h-2zM11 3h2v1h-2zM14 3h2v1h-2zM6 4h2v1h-2zM11 4h2v1h-2zM14 4h2v1h-2zM7 5h2v1h-2zM10 5h2v1h-2zM13 5h2v1h-2zM16 5h1v1h-1zM3 6h2v1h-2zM7 6h5v1h-5zM13 6h2v1h-2zM16 6h1v1h-1zM3 7h2v1h-2zM7 7h4v1h-4zM12 7h2v1h-2zM15 7h2v1h-2zM3 8h13v1h-13zM4 9h11v1h-11zM5 10h10v1h-10zM6 11h8v1h-8zM7 12h6v1h-6zM8 13h5v1h-5z" fill="#FFFFFF"/><path d="M11 7h1v1h-1z" fill="#808080"/><path d="M14 7h1v1h-1z" fill="#008080"/></svg><svg style="position:absolute;left:781px;top:52px" width="16" height="12" shape-rendering="crispEdges"><path d="M7 0h2v1h-2zM10 0h2v1h-2zM6 1h1v1h-1zM9 1h1v1h-1zM12 1h1v1h-1zM6 2h1v1h-1zM9 2h1v1h-1zM12 2h3v1h-3zM4 3h3v1h-3zM9 3h1v1h-1zM12 3h1v1h-1zM15 3h1v1h-1zM3 4h1v1h-1zM6 4h1v1h-1zM9 4h1v1h-1zM12 4h1v1h-1zM15 4h1v1h-1zM3 5h1v1h-1zM7 5h1v1h-1zM15 5h1v1h-1zM4 6h1v1h-1zM15 6h1v1h-1zM5 7h1v1h-1zM14 7h1v1h-1zM6 8h1v1h-1zM13 8h1v1h-1zM6 9h1v1h-1zM12 9h1v1h-1zM6 10h1v1h-1zM12 10h1v1h-1zM6 11h7v1h-7z" fill="#000000"/><path d="M7 1h2v1h-2zM10 1h2v1h-2zM7 2h2v1h-2zM10 2h2v1h-2zM7 3h2v1h-2zM10 3h2v1h-2zM13 3h2v1h-2zM4 4h2v1h-2zM7 4h2v1h-2zM10 4h2v1h-2zM13 4h2v1h-2zM4 5h3v1h-3zM8 5h7v1h-7zM5 6h10v1h-10zM6 7h8v1h-8zM7 8h6v1h-6zM7 9h5v1h-5zM7 10h5v1h-5z" fill="#FFFFFF"/></svg><svg style="position:absolute;left:807px;top:52px;overflow:visible" width="15" height="13" viewBox="0 0 15 13"><g><path d="M4 3 Q7 0.5 10.5 2.5 Q13.5 5 12 9 Q10 12 6 11" fill="none" stroke="#fff" stroke-width="1.6" transform="translate(0.7 0.7)"/><path d="M4 3 Q7 0.5 10.5 2.5 Q13.5 5 12 9 Q10 12 6 11" fill="none" stroke="#808080" stroke-width="1.3"/><path d="M1 2 L1.5 6 L5 5" fill="none" stroke="#808080" stroke-width="1.2"/></g></svg><svg style="position:absolute;left:830px;top:52px;overflow:visible" width="15" height="13" viewBox="0 0 15 13"><g transform="translate(15 0) scale(-1 1)"><path d="M4 3 Q7 0.5 10.5 2.5 Q13.5 5 12 9 Q10 12 6 11" fill="none" stroke="#fff" stroke-width="1.6" transform="translate(0.7 0.7)"/><path d="M4 3 Q7 0.5 10.5 2.5 Q13.5 5 12 9 Q10 12 6 11" fill="none" stroke="#808080" stroke-width="1.3"/><path d="M1 2 L1.5 6 L5 5" fill="none" stroke="#808080" stroke-width="1.2"/></g></svg><svg style="position:absolute;left:850px;top:49px;overflow:visible" width="20" height="17" viewBox="0 0 20 17" shape-rendering="crispEdges"><g transform="translate(1 1)"><path d="M3.5 4.5 L6.5 1.5 H12.5 L15.5 4.5 M15.5 4.5 V2 M15.5 4.5 H13" fill="none" stroke="#fff" stroke-width="1"/><path d="M6.5 7.5 H2 V15.5 H6.5 M2 11.5 H5.5" fill="none" stroke="#fff" stroke-width="2"/><path d="M9.5 13.5 V9.5 H17.5 V13.5 M13.5 9.5 V13.5" fill="none" stroke="#fff" stroke-width="2"/></g><path d="M3.5 4.5 L6.5 1.5 H12.5 L15.5 4.5 M15.5 4.5 V2 M15.5 4.5 H13" fill="none" stroke="#808080" stroke-width="1"/><path d="M6.5 7.5 H2 V15.5 H6.5 M2 11.5 H5.5" fill="none" stroke="#808080" stroke-width="2"/><path d="M9.5 13.5 V9.5 H17.5 V13.5 M13.5 9.5 V13.5" fill="none" stroke="#808080" stroke-width="2"/></svg><svg style="position:absolute;left:873px;top:49px;overflow:visible" width="20" height="17" viewBox="0 0 20 17" shape-rendering="crispEdges"><g transform="translate(1 1)"><path d="M3.5 4.5 L6.5 1.5 H12.5 L15.5 4.5 M15.5 4.5 V2 M15.5 4.5 H13" fill="none" stroke="#fff" stroke-width="1"/><path d="M6.5 7.5 H2 V15.5 H6.5 M2 11.5 H5.5" fill="none" stroke="#fff" stroke-width="2"/><path d="M13 7.5 H17.5 V15.5 H13 M17.5 11.5 H14" fill="none" stroke="#fff" stroke-width="2"/></g><path d="M3.5 4.5 L6.5 1.5 H12.5 L15.5 4.5 M15.5 4.5 V2 M15.5 4.5 H13" fill="none" stroke="#808080" stroke-width="1"/><path d="M6.5 7.5 H2 V15.5 H6.5 M2 11.5 H5.5" fill="none" stroke="#808080" stroke-width="2"/><path d="M13 7.5 H17.5 V15.5 H13 M17.5 11.5 H14" fill="none" stroke="#808080" stroke-width="2"/></svg><div style="left:898px;top:51px;font:bold 13.5px 'Liberation Sans', sans-serif;color:#000;white-space:pre;line-height:1;font-family:'Liberation Serif',serif"><i>Aa</i></div><div style="left:922px;top:51px;font:normal 11.5px 'Liberation Sans', sans-serif;color:#000;white-space:pre;line-height:1;">.op</div><div style="left:4px;top:72px;width:1358px;height:1px;background:#808080;"></div><div style="left:4px;top:72px;width:1px;height:777px;background:#808080;"></div><div style="left:5px;top:73px;width:1356px;height:1px;background:#404040;"></div><div style="left:5px;top:73px;width:1px;height:775px;background:#404040;"></div><div style="left:4px;top:849px;width:1359px;height:1px;background:#FFFFFF;"></div><div style="left:1362px;top:72px;width:1px;height:778px;background:#FFFFFF;"></div><div style="left:5px;top:848px;width:1357px;height:1px;background:#D4D0C8;"></div><div style="left:1361px;top:73px;width:1px;height:776px;background:#D4D0C8;"></div><div style="left:157px;top:95px;width:1204px;height:1px;background:#FFFFFF;"></div><div style="left:6px;top:97px;width:1355px;height:1px;background:#808080;"></div><div style="left:6px;top:98px;width:1355px;height:1px;background:#404040;"></div><div style="left:7px;top:74px;width:148px;height:1px;background:#FFFFFF;"></div><div style="left:6px;top:75px;width:1px;height:22px;background:#FFFFFF;"></div><div style="left:155px;top:75px;width:1px;height:22px;background:#808080;"></div><div style="left:156px;top:75px;width:1px;height:22px;background:#404040;"></div><svg style="position:absolute;left:10px;top:76px" width="17" height="16" shape-rendering="crispEdges"><path d="M15 0h1v1h-1zM14 1h1v1h-1zM13 2h1v1h-1zM9 3h2v1h-2zM12 3h1v1h-1zM9 4h3v1h-3zM9 5h2v1h-2zM9 6h2v1h-2zM6 7h5v1h-5zM9 8h2v1h-2zM9 9h2v1h-2zM9 10h3v1h-3zM9 11h2v1h-2zM12 11h1v1h-1zM14 11h1v1h-1zM13 12h2v1h-2zM12 13h4v1h-4zM14 14h2v1h-2zM16 15h1v1h-1z" fill="#0000FF"/></svg><div style="left:37px;top:80px;font:normal 10.7px 'Liberation Sans', sans-serif;color:#000;white-space:pre;line-height:1;">sample_hold_inv_ci.asc</div><div style="left:158px;top:76px;width:142px;height:1px;background:#FFFFFF;"></div><div style="left:157px;top:77px;width:1px;height:18px;background:#FFFFFF;"></div><div style="left:300px;top:77px;width:1px;height:18px;background:#808080;"></div><div style="left:301px;top:77px;width:1px;height:18px;background:#404040;"></div><svg style="position:absolute;left:158px;top:78px" width="19" height="16" shape-rendering="crispEdges"><path d="M5 0h1v1h-1zM3 1h3v1h-3zM5 2h1v1h-1zM5 3h1v1h-1zM3 4h3v1h-3zM5 5h1v1h-1zM5 6h1v1h-1zM3 7h3v1h-3zM5 8h1v1h-1zM5 9h1v1h-1zM3 10h3v1h-3zM5 11h1v1h-1zM5 12h1v1h-1zM3 13h16v1h-16zM5 14h1v1h-1zM8 14h1v1h-1zM11 14h1v1h-1zM14 14h1v1h-1zM17 14h1v1h-1zM5 15h1v1h-1zM8 15h1v1h-1zM11 15h1v1h-1zM14 15h1v1h-1zM17 15h1v1h-1z" fill="#000000"/><path d="M6 0h13v1h-13zM6 1h13v1h-13zM6 2h13v1h-13zM6 3h12v1h-12zM6 4h3v1h-3zM12 4h5v1h-5zM6 5h2v1h-2zM13 5h3v1h-3zM18 5h1v1h-1zM6 6h1v1h-1zM9 6h3v1h-3zM14 6h1v1h-1zM17 6h2v1h-2zM8 7h5v1h-5zM16 7h3v1h-3zM7 8h6v1h-6zM16 8h3v1h-3zM6 9h13v1h-13zM6 10h13v1h-13zM6 11h13v1h-13z" fill="#C0C0C0"/><path d="M18 3h1v1h-1zM9 4h3v1h-3zM17 4h2v1h-2zM8 5h5v1h-5zM16 5h2v1h-2zM7 6h2v1h-2zM12 6h2v1h-2zM15 6h2v1h-2zM6 7h2v1h-2zM13 7h3v1h-3zM6 8h1v1h-1zM13 8h3v1h-3z" fill="#FF0000"/><path d="M6 12h13v1h-13z" fill="#D4D0C8"/></svg><div style="left:184px;top:82px;font:normal 10.7px 'Liberation Sans', sans-serif;color:#000;white-space:pre;line-height:1;">sample_hold_inv_ci.raw</div><div style="left:6px;top:101px;width:676px;height:1px;background:#D4D0C8;"></div><div style="left:6px;top:101px;width:1px;height:746px;background:#D4D0C8;"></div><div style="left:6px;top:847px;width:677px;height:1px;background:#404040;"></div><div style="left:682px;top:101px;width:1px;height:747px;background:#404040;"></div><div style="left:7px;top:102px;width:674px;height:1px;background:#FFFFFF;"></div><div style="left:7px;top:102px;width:1px;height:744px;background:#FFFFFF;"></div><div style="left:7px;top:846px;width:675px;height:1px;background:#808080;"></div><div style="left:681px;top:102px;width:1px;height:745px;background:#808080;"></div><div style="left:10px;top:105px;width:669px;height:18px;background:linear-gradient(to right,#0A246A 0px,#A6CAF0 615px,#A6CAF0 100%);"></div><div style="left:10px;top:124px;width:668px;height:1px;background:#808080;"></div><div style="left:10px;top:124px;width:1px;height:719px;background:#808080;"></div><div style="left:10px;top:843px;width:669px;height:1px;background:#FFFFFF;"></div><div style="left:678px;top:124px;width:1px;height:720px;background:#FFFFFF;"></div><div style="left:11px;top:125px;width:666px;height:1px;background:#404040;"></div><div style="left:11px;top:125px;width:1px;height:717px;background:#404040;"></div><div style="left:11px;top:842px;width:667px;height:1px;background:#D4D0C8;"></div><div style="left:677px;top:125px;width:1px;height:718px;background:#D4D0C8;"></div><div style="left:627px;top:107px;width:15px;height:1px;background:#FFFFFF;"></div><div style="left:627px;top:107px;width:1px;height:13px;background:#FFFFFF;"></div><div style="left:627px;top:120px;width:16px;height:1px;background:#404040;"></div><div style="left:642px;top:107px;width:1px;height:14px;background:#404040;"></div><div style="left:628px;top:108px;width:13px;height:1px;background:#D4D0C8;"></div><div style="left:628px;top:108px;width:1px;height:11px;background:#D4D0C8;"></div><div style="left:628px;top:119px;width:14px;height:1px;background:#808080;"></div><div style="left:641px;top:108px;width:1px;height:12px;background:#808080;"></div><div style="left:629px;top:109px;width:12px;height:10px;background:#D4D0C8;"></div><div style="left:631px;top:116px;width:6px;height:2px;background:#000;"></div><div style="left:643px;top:107px;width:15px;height:1px;background:#FFFFFF;"></div><div style="left:643px;top:107px;width:1px;height:13px;background:#FFFFFF;"></div><div style="left:643px;top:120px;width:16px;height:1px;background:#404040;"></div><div style="left:658px;top:107px;width:1px;height:14px;background:#404040;"></div><div style="left:644px;top:108px;width:13px;height:1px;background:#D4D0C8;"></div><div style="left:644px;top:108px;width:1px;height:11px;background:#D4D0C8;"></div><div style="left:644px;top:119px;width:14px;height:1px;background:#808080;"></div><div style="left:657px;top:108px;width:1px;height:12px;background:#808080;"></div><div style="left:645px;top:109px;width:12px;height:10px;background:#D4D0C8;"></div><div style="left:646px;top:109px;width:9px;height:9px;background:transparent;box-sizing:border-box;border:1px solid #000;border-top-width:2px"></div><div style="left:661px;top:107px;width:15px;height:1px;background:#FFFFFF;"></div><div style="left:661px;top:107px;width:1px;height:13px;background:#FFFFFF;"></div><div style="left:661px;top:120px;width:16px;height:1px;background:#404040;"></div><div style="left:676px;top:107px;width:1px;height:14px;background:#404040;"></div><div style="left:662px;top:108px;width:13px;height:1px;background:#D4D0C8;"></div><div style="left:662px;top:108px;width:1px;height:11px;background:#D4D0C8;"></div><div style="left:662px;top:119px;width:14px;height:1px;background:#808080;"></div><div style="left:675px;top:108px;width:1px;height:12px;background:#808080;"></div><div style="left:663px;top:109px;width:12px;height:10px;background:#D4D0C8;"></div><svg style="position:absolute;left:661px;top:107px" width="16" height="14"><path d="M4.5 3.5 L11 10 M5 3.5 L11.5 10 M11 3.5 L4.5 10 M11.5 3.5 L5 10" stroke="#000" stroke-width="1.1" shape-rendering="crispEdges"/></svg><div style="left:12px;top:126px;width:665px;height:716px;background:#C0C0C0;"></div><svg style="position:absolute;left:8px;top:106px" width="17" height="16" shape-rendering="crispEdges"><path d="M15 0h1v1h-1zM14 1h1v1h-1zM13 2h1v1h-1zM9 3h2v1h-2zM12 3h1v1h-1zM9 4h3v1h-3zM9 5h2v1h-2zM9 6h2v1h-2zM6 7h5v1h-5zM9 8h2v1h-2zM9 9h2v1h-2zM9 10h3v1h-3zM9 11h2v1h-2zM12 11h1v1h-1zM14 11h1v1h-1zM13 12h2v1h-2zM12 13h4v1h-4zM14 14h2v1h-2zM16 15h1v1h-1z" fill="#0000FF"/></svg><div style="left:30px;top:109px;font:bold 11.9px 'Liberation Sans', sans-serif;color:#fff;white-space:pre;line-height:1;">sample_hold_inv_ci.asc</div><div style="left:683px;top:101px;width:676px;height:1px;background:#D4D0C8;"></div><div style="left:683px;top:101px;width:1px;height:746px;background:#D4D0C8;"></div><div style="left:683px;top:847px;width:677px;height:1px;background:#404040;"></div><div style="left:1359px;top:101px;width:1px;height:747px;background:#404040;"></div><div style="left:684px;top:102px;width:674px;height:1px;background:#FFFFFF;"></div><div style="left:684px;top:102px;width:1px;height:744px;background:#FFFFFF;"></div><div style="left:684px;top:846px;width:675px;height:1px;background:#808080;"></div><div style="left:1358px;top:102px;width:1px;height:745px;background:#808080;"></div><div style="left:687px;top:105px;width:669px;height:18px;background:linear-gradient(to right,#808080 0px,#C0C0C0 615px,#C0C0C0 100%);"></div><div style="left:687px;top:124px;width:668px;height:1px;background:#808080;"></div><div style="left:687px;top:124px;width:1px;height:719px;background:#808080;"></div><div style="left:687px;top:843px;width:669px;height:1px;background:#FFFFFF;"></div><div style="left:1355px;top:124px;width:1px;height:720px;background:#FFFFFF;"></div><div style="left:688px;top:125px;width:666px;height:1px;background:#404040;"></div><div style="left:688px;top:125px;width:1px;height:717px;background:#404040;"></div><div style="left:688px;top:842px;width:667px;height:1px;background:#D4D0C8;"></div><div style="left:1354px;top:125px;width:1px;height:718px;background:#D4D0C8;"></div><div style="left:1304px;top:107px;width:15px;height:1px;background:#FFFFFF;"></div><div style="left:1304px;top:107px;width:1px;height:13px;background:#FFFFFF;"></div><div style="left:1304px;top:120px;width:16px;height:1px;background:#404040;"></div><div style="left:1319px;top:107px;width:1px;height:14px;background:#404040;"></div><div style="left:1305px;top:108px;width:13px;height:1px;background:#D4D0C8;"></div><div style="left:1305px;top:108px;width:1px;height:11px;background:#D4D0C8;"></div><div style="left:1305px;top:119px;width:14px;height:1px;background:#808080;"></div><div style="left:1318px;top:108px;width:1px;height:12px;background:#808080;"></div><div style="left:1306px;top:109px;width:12px;height:10px;background:#D4D0C8;"></div><div style="left:1308px;top:116px;width:6px;height:2px;background:#000;"></div><div style="left:1320px;top:107px;width:15px;height:1px;background:#FFFFFF;"></div><div style="left:1320px;top:107px;width:1px;height:13px;background:#FFFFFF;"></div><div style="left:1320px;top:120px;width:16px;height:1px;background:#404040;"></div><div style="left:1335px;top:107px;width:1px;height:14px;background:#404040;"></div><div style="left:1321px;top:108px;width:13px;height:1px;background:#D4D0C8;"></div><div style="left:1321px;top:108px;width:1px;height:11px;background:#D4D0C8;"></div><div style="left:1321px;top:119px;width:14px;height:1px;background:#808080;"></div><div style="left:1334px;top:108px;width:1px;height:12px;background:#808080;"></div><div style="left:1322px;top:109px;width:12px;height:10px;background:#D4D0C8;"></div><div style="left:1323px;top:109px;width:9px;height:9px;background:transparent;box-sizing:border-box;border:1px solid #000;border-top-width:2px"></div><div style="left:1338px;top:107px;width:15px;height:1px;background:#FFFFFF;"></div><div style="left:1338px;top:107px;width:1px;height:13px;background:#FFFFFF;"></div><div style="left:1338px;top:120px;width:16px;height:1px;background:#404040;"></div><div style="left:1353px;top:107px;width:1px;height:14px;background:#404040;"></div><div style="left:1339px;top:108px;width:13px;height:1px;background:#D4D0C8;"></div><div style="left:1339px;top:108px;width:1px;height:11px;background:#D4D0C8;"></div><div style="left:1339px;top:119px;width:14px;height:1px;background:#808080;"></div><div style="left:1352px;top:108px;width:1px;height:12px;background:#808080;"></div><div style="left:1340px;top:109px;width:12px;height:10px;background:#D4D0C8;"></div><svg style="position:absolute;left:1338px;top:107px" width="16" height="14"><path d="M4.5 3.5 L11 10 M5 3.5 L11.5 10 M11 3.5 L4.5 10 M11.5 3.5 L5 10" stroke="#000" stroke-width="1.1" shape-rendering="crispEdges"/></svg><div style="left:689px;top:126px;width:665px;height:716px;background:#FFFFFF;"></div><svg style="position:absolute;left:686px;top:106px" width="19" height="16" shape-rendering="crispEdges"><path d="M5 0h1v1h-1zM3 1h3v1h-3zM5 2h1v1h-1zM5 3h1v1h-1zM3 4h3v1h-3zM5 5h1v1h-1zM5 6h1v1h-1zM3 7h3v1h-3zM5 8h1v1h-1zM5 9h1v1h-1zM3 10h3v1h-3zM5 11h1v1h-1zM5 12h1v1h-1zM3 13h16v1h-16zM5 14h1v1h-1zM8 14h1v1h-1zM11 14h1v1h-1zM14 14h1v1h-1zM17 14h1v1h-1zM5 15h1v1h-1zM8 15h1v1h-1zM11 15h1v1h-1zM14 15h1v1h-1zM17 15h1v1h-1z" fill="#000000"/><path d="M6 0h13v1h-13zM6 1h13v1h-13zM6 2h13v1h-13zM6 3h12v1h-12zM6 4h3v1h-3zM12 4h5v1h-5zM6 5h2v1h-2zM13 5h3v1h-3zM18 5h1v1h-1zM6 6h1v1h-1zM9 6h3v1h-3zM14 6h1v1h-1zM17 6h2v1h-2zM8 7h5v1h-5zM16 7h3v1h-3zM7 8h6v1h-6zM16 8h3v1h-3zM6 9h13v1h-13zM6 10h13v1h-13zM6 11h13v1h-13z" fill="#C0C0C0"/><path d="M18 3h1v1h-1zM9 4h3v1h-3zM17 4h2v1h-2zM8 5h5v1h-5zM16 5h2v1h-2zM7 6h2v1h-2zM12 6h2v1h-2zM15 6h2v1h-2zM6 7h2v1h-2zM13 7h3v1h-3zM6 8h1v1h-1zM13 8h3v1h-3z" fill="#FF0000"/><path d="M6 12h13v1h-13z" fill="#D4D0C8"/></svg><div style="left:707px;top:109px;font:bold 11.9px 'Liberation Sans', sans-serif;color:#D4D0C8;white-space:pre;line-height:1;">sample_hold_inv_ci.raw</div><svg style="position:absolute;left:0;top:0" width="1367" height="872" viewBox="0 0 1367 872"><defs><clipPath id="cs"><rect x="12" y="126" width="665" height="716"/></clipPath></defs><g clip-path="url(#cs)" shape-rendering="crispEdges" stroke-width="1"><path d="M149.5 282.5 L177.5 282.5" stroke="#0000FF"/><path d="M221.5 282.5 L539.5 282.5" stroke="#0000FF"/><path d="M149.5 282.5 L149.5 391.5" stroke="#0000FF"/><path d="M149.5 318.5 L177.5 318.5" stroke="#0000FF"/><path d="M213.5 318.5 L240.5 318.5" stroke="#0000FF"/><path d="M240.5 282.5 L240.5 318.5" stroke="#0000FF"/><path d="M113.5 391.5 L168.5 391.5" stroke="#0000FF"/><path d="M212.5 391.5 L276.5 391.5" stroke="#0000FF"/><path d="M113.5 340.5 L113.5 391.5" stroke="#0000FF"/><path d="M240.5 391.5 L240.5 431.5" stroke="#0000FF"/><path d="M258.5 327.5 L258.5 372.5" stroke="#0000FF"/><path d="M258.5 372.5 L276.5 372.5" stroke="#0000FF"/><path d="M258.5 327.5 L330.5 327.5" stroke="#0000FF"/><path d="M330.5 327.5 L330.5 381.5" stroke="#0000FF"/><path d="M312.5 381.5 L330.5 381.5" stroke="#0000FF"/><path d="M330.5 327.5 L358.5 327.5" stroke="#0000FF"/><path d="M402.5 327.5 L494.5 327.5" stroke="#0000FF"/><path d="M530.5 327.5 L539.5 327.5" stroke="#0000FF"/><path d="M539.5 282.5 L539.5 391.5" stroke="#0000FF"/><path d="M484.5 327.5 L484.5 381.5" stroke="#0000FF"/><path d="M484.5 381.5 L493.5 381.5" stroke="#0000FF"/><path d="M394.5 349.5 L394.5 372.5" stroke="#0000FF"/><path d="M412.5 400.5 L421.5 400.5" stroke="#0000FF"/><path d="M412.5 400.5 L412.5 455.5" stroke="#0000FF"/><path d="M465.5 400.5 L493.5 400.5" stroke="#0000FF"/><path d="M484.5 400.5 L484.5 409.5" stroke="#0000FF"/><path d="M484.5 445.5 L484.5 455.5" stroke="#0000FF"/><path d="M530.5 391.5 L566.5 391.5" stroke="#0000FF"/><path d="M113.5 300.5 L113.5 301.5" stroke="#0000FF"/><path d="M95.5 499.5 L95.5 522.5" stroke="#0000FF"/><path d="M95.5 499.5 L113.5 499.5" stroke="#0000FF"/><path d="M95.5 557.5 L95.5 573.5" stroke="#0000FF"/><path d="M158.5 499.5 L158.5 522.5" stroke="#0000FF"/><path d="M158.5 499.5 L176.5 499.5" stroke="#0000FF"/><path d="M158.5 557.5 L158.5 573.5" stroke="#0000FF"/><path d="M222.5 617.5 L222.5 644.5" stroke="#0000FF"/><path d="M222.5 644.5 L285.5 644.5" stroke="#0000FF"/><path d="M263.5 617.5 L339.5 617.5" stroke="#0000FF"/><path d="M339.5 617.5 L339.5 653.5" stroke="#0000FF"/><path d="M321.5 653.5 L348.5 653.5" stroke="#0000FF"/><path d="M267.5 662.5 L285.5 662.5" stroke="#0000FF"/><path d="M267.5 662.5 L267.5 681.5" stroke="#0000FF"/><path d="M421.5 626.5 L421.5 640.5" stroke="#0000FF"/><path d="M421.5 675.5 L421.5 690.5" stroke="#0000FF"/><path d="M466.5 626.5 L466.5 640.5" stroke="#0000FF"/><path d="M466.5 675.5 L466.5 690.5" stroke="#0000FF"/><path d="M240.5 467.5 L240.5 473.5" stroke="#0000FF"/><rect x="111" y="389" width="5" height="5" fill="#0000FF" stroke="none"/><rect x="147" y="389" width="5" height="5" fill="#0000FF" stroke="none"/><rect x="147" y="316" width="5" height="5" fill="#0000FF" stroke="none"/><rect x="238" y="280" width="5" height="5" fill="#0000FF" stroke="none"/><rect x="238" y="389" width="5" height="5" fill="#0000FF" stroke="none"/><rect x="274" y="389" width="5" height="5" fill="#0000FF" stroke="none"/><rect x="328" y="325" width="5" height="5" fill="#0000FF" stroke="none"/><rect x="482" y="325" width="5" height="5" fill="#0000FF" stroke="none"/><rect x="537" y="325" width="5" height="5" fill="#0000FF" stroke="none"/><rect x="482" y="398" width="5" height="5" fill="#0000FF" stroke="none"/><rect x="537" y="389" width="5" height="5" fill="#0000FF" stroke="none"/><rect x="220" y="615" width="5" height="5" fill="#0000FF" stroke="none"/><rect x="337" y="651" width="5" height="5" fill="#0000FF" stroke="none"/><path d="M384.5 372.5 L404.5 372.5 L394.5 382.5 Z" stroke="#0000FF" fill="none"/><path d="M402.5 455.5 L422.5 455.5 L412.5 465.5 Z" stroke="#0000FF" fill="none"/><path d="M474.5 455.5 L494.5 455.5 L484.5 465.5 Z" stroke="#0000FF" fill="none"/><path d="M230.5 473.5 L250.5 473.5 L240.5 483.5 Z" stroke="#0000FF" fill="none"/><path d="M85.5 573.5 L105.5 573.5 L95.5 583.5 Z" stroke="#0000FF" fill="none"/><path d="M148.5 573.5 L168.5 573.5 L158.5 583.5 Z" stroke="#0000FF" fill="none"/><path d="M257.5 681.5 L277.5 681.5 L267.5 691.5 Z" stroke="#0000FF" fill="none"/><path d="M411.5 690.5 L431.5 690.5 L421.5 700.5 Z" stroke="#0000FF" fill="none"/><path d="M456.5 690.5 L476.5 690.5 L466.5 700.5 Z" stroke="#0000FF" fill="none"/><path d="M103.5 300.5 L123.5 300.5 L113.5 290.5 Z" stroke="#0000FF" fill="none"/><path d="M193.5 363.5 L213.5 363.5 L203.5 353.5 Z" stroke="#0000FF" fill="none"/><path d="M447.5 372.5 L467.5 372.5 L457.5 362.5 Z" stroke="#0000FF" fill="none"/><path d="M86.5 299.5 L86.5 319.5 L76.5 309.5 Z" stroke="#0000FF" fill="none"/><path d="M213.5 426.5 L213.5 446.5 L203.5 436.5 Z" stroke="#0000FF" fill="none"/><path d="M177.5 282.5 L181.5 282.5 L185.5 273.5 L194.5 291.5 L203.5 273.5 L213.5 291.5 L217.5 282.5 L221.5 282.5" stroke="#000080" fill="none"/><path d="M69.5 391.5 L73.5 391.5 L77.5 382.5 L86.5 400.5 L95.5 382.5 L105.5 400.5 L109.5 391.5 L113.5 391.5" stroke="#000080" fill="none"/><path d="M177.5 617.5 L181.5 617.5 L185.5 608.5 L194.5 626.5 L203.5 608.5 L213.5 626.5 L217.5 617.5 L221.5 617.5" stroke="#000080" fill="none"/><path d="M219.5 617.5 L223.5 617.5 L227.5 608.5 L236.5 626.5 L245.5 608.5 L255.5 626.5 L259.5 617.5 L263.5 617.5" stroke="#000080" fill="none"/><path d="M177.5 318.5 L192.5 318.5" stroke="#000080"/><path d="M197.5 318.5 L213.5 318.5" stroke="#000080"/><path d="M192.5 309.5 L192.5 327.5" stroke="#000080"/><path d="M197.5 309.5 L197.5 327.5" stroke="#000080"/><path d="M494.5 327.5 L509.5 327.5" stroke="#000080"/><path d="M514.5 327.5 L530.5 327.5" stroke="#000080"/><path d="M509.5 318.5 L509.5 336.5" stroke="#000080"/><path d="M514.5 318.5 L514.5 336.5" stroke="#000080"/><path d="M484.5 409.5 L484.5 425.5" stroke="#000080"/><path d="M484.5 429.5 L484.5 445.5" stroke="#000080"/><path d="M475.5 425.5 L493.5 425.5" stroke="#000080"/><path d="M475.5 429.5 L493.5 429.5" stroke="#000080"/><path d="M276.5 363.5 L312.5 381.5 L312.5 382.5 L276.5 400.5 L276.5 363.5" stroke="#000080" fill="none"/><path d="M294.5 363.5 L294.5 372.5" stroke="#000080"/><path d="M294.5 391.5 L294.5 400.5" stroke="#000080"/><path d="M279.5 372.5 L284.5 372.5" stroke="#000080"/><path d="M279.5 391.5 L285.5 391.5" stroke="#000080"/><path d="M282.5 388.5 L282.5 394.5" stroke="#000080"/><path d="M297.5 370.5 L301.5 370.5" stroke="#000080"/><path d="M299.5 368.5 L299.5 372.5" stroke="#000080"/><path d="M297.5 393.5 L302.5 393.5" stroke="#000080"/><path d="M493.5 372.5 L529.5 390.5 L529.5 391.5 L493.5 409.5 L493.5 372.5" stroke="#000080" fill="none"/><path d="M511.5 372.5 L511.5 381.5" stroke="#000080"/><path d="M511.5 400.5 L511.5 409.5" stroke="#000080"/><path d="M496.5 381.5 L501.5 381.5" stroke="#000080"/><path d="M496.5 400.5 L502.5 400.5" stroke="#000080"/><path d="M499.5 397.5 L499.5 403.5" stroke="#000080"/><path d="M514.5 379.5 L518.5 379.5" stroke="#000080"/><path d="M516.5 377.5 L516.5 381.5" stroke="#000080"/><path d="M514.5 402.5 L519.5 402.5" stroke="#000080"/><path d="M285.5 635.5 L321.5 653.5 L321.5 654.5 L285.5 672.5 L285.5 635.5" stroke="#000080" fill="none"/><path d="M303.5 635.5 L303.5 644.5" stroke="#000080"/><path d="M303.5 663.5 L303.5 672.5" stroke="#000080"/><path d="M288.5 644.5 L293.5 644.5" stroke="#000080"/><path d="M288.5 663.5 L294.5 663.5" stroke="#000080"/><path d="M291.5 660.5 L291.5 666.5" stroke="#000080"/><path d="M306.5 642.5 L310.5 642.5" stroke="#000080"/><path d="M308.5 640.5 L308.5 644.5" stroke="#000080"/><path d="M306.5 665.5 L311.5 665.5" stroke="#000080"/><circle cx="113.5" cy="322.5" r="17.5" stroke="#000080" fill="none"/><path d="M113.5 300.5 L113.5 311.5" stroke="#000080" fill="none"/><path d="M113.5 311.5 L124.5 325" stroke="#000080" fill="none"/><path d="M123 322h3v1h-3z M123 326h3v1h-3z M122 323h1v3h-1z M126 323h1v3h-1z" fill="#000080" stroke="none"/><path d="M112 329h3v1h-3z M112 333h3v1h-3z M111 330h1v3h-1z M115 330h1v3h-1z" fill="#000080" stroke="none"/><path d="M113.5 333 L113.5 344.5" stroke="#000080" fill="none"/><path d="M86.5 309.5 L97.5 309.5 L100 311.5" stroke="#000080" fill="none"/><path d="M86.5 337 L96.5 337 L99.5 333.5" stroke="#000080" fill="none"/><path d="M86 332.5 L91 332.5" stroke="#000080"/><path d="M88.5 330 L88.5 335" stroke="#000080"/><path d="M87.5 313.5 L90.5 313.5" stroke="#000080" fill="none"/><circle cx="240.5" cy="449.5" r="17.5" stroke="#000080" fill="none"/><path d="M240.5 427.5 L240.5 438.5" stroke="#000080" fill="none"/><path d="M240.5 438.5 L251.5 452" stroke="#000080" fill="none"/><path d="M250 450h3v1h-3z M250 454h3v1h-3z M249 451h1v3h-1z M253 451h1v3h-1z" fill="#000080" stroke="none"/><path d="M239 456h3v1h-3z M239 460h3v1h-3z M238 457h1v3h-1z M242 457h1v3h-1z" fill="#000080" stroke="none"/><path d="M240.5 460 L240.5 471.5" stroke="#000080" fill="none"/><path d="M213.5 436.5 L224.5 436.5 L227 438.5" stroke="#000080" fill="none"/><path d="M213.5 464 L223.5 464 L226.5 460.5" stroke="#000080" fill="none"/><path d="M214 459.5 L219 459.5" stroke="#000080"/><path d="M216.5 457 L216.5 462" stroke="#000080"/><path d="M214.5 440.5 L217.5 440.5" stroke="#000080" fill="none"/><circle cx="190.5" cy="391.5" r="17.5" stroke="#000080" fill="none"/><path d="M212.5 391.5 L201.5 391.5" stroke="#000080" fill="none"/><path d="M201.5 391.5 L188 402.5" stroke="#000080" fill="none"/><path d="M187 400h3v1h-3z M187 404h3v1h-3z M186 401h1v3h-1z M190 401h1v3h-1z" fill="#000080" stroke="none"/><path d="M180 389h3v1h-3z M180 393h3v1h-3z M179 390h1v3h-1z M183 390h1v3h-1z" fill="#000080" stroke="none"/><path d="M180 391.5 L168.5 391.5" stroke="#000080" fill="none"/><path d="M203.5 364.5 L203.5 375.5 L201.5 378" stroke="#000080" fill="none"/><path d="M176 364.5 L176 374.5 L179.5 377.5" stroke="#000080" fill="none"/><path d="M178 366.5 L183 366.5" stroke="#000080"/><path d="M180.5 364 L180.5 369" stroke="#000080"/><path d="M199.5 365.5 L199.5 368.5" stroke="#000080" fill="none"/><circle cx="443.5" cy="400.5" r="17.5" stroke="#000080" fill="none"/><path d="M465.5 400.5 L454.5 400.5" stroke="#000080" fill="none"/><path d="M454.5 400.5 L441 411.5" stroke="#000080" fill="none"/><path d="M439 409h3v1h-3z M439 413h3v1h-3z M438 410h1v3h-1z M442 410h1v3h-1z" fill="#000080" stroke="none"/><path d="M433 398h3v1h-3z M433 402h3v1h-3z M432 399h1v3h-1z M436 399h1v3h-1z" fill="#000080" stroke="none"/><path d="M433 400.5 L421.5 400.5" stroke="#000080" fill="none"/><path d="M456.5 373.5 L456.5 384.5 L454.5 387" stroke="#000080" fill="none"/><path d="M429 373.5 L429 383.5 L432.5 386.5" stroke="#000080" fill="none"/><path d="M431 376.5 L436 376.5" stroke="#000080"/><path d="M433.5 374 L433.5 379" stroke="#000080"/><path d="M452.5 374.5 L452.5 377.5" stroke="#000080" fill="none"/><circle cx="380.5" cy="327.5" r="17.5" stroke="#000080" fill="none"/><path d="M402.5 327.5 L391.5 327.5" stroke="#000080" fill="none"/><path d="M391.5 327.5 L378 316.5" stroke="#000080" fill="none"/><path d="M377 314h3v1h-3z M377 318h3v1h-3z M376 315h1v3h-1z M380 315h1v3h-1z" fill="#000080" stroke="none"/><path d="M370 325h3v1h-3z M370 329h3v1h-3z M369 326h1v3h-1z M373 326h1v3h-1z" fill="#000080" stroke="none"/><path d="M370 327.5 L358.5 327.5" stroke="#000080" fill="none"/><path d="M393.5 354.5 L393.5 343.5 L391.5 341" stroke="#000080" fill="none"/><path d="M366 354.5 L366 344.5 L369.5 341.5" stroke="#000080" fill="none"/><path d="M368 352.5 L373 352.5" stroke="#000080"/><path d="M370.5 350 L370.5 355" stroke="#000080"/><path d="M389.5 353.5 L389.5 350.5" stroke="#000080" fill="none"/><circle cx="95.5" cy="540.5" r="17.5" stroke="#000080" fill="none"/><path d="M90.5 530.5 L100.5 530.5" stroke="#000080"/><path d="M95.5 525.5 L95.5 535.5" stroke="#000080"/><path d="M90.5 551.5 L100.5 551.5" stroke="#000080"/><circle cx="158.5" cy="540.5" r="17.5" stroke="#000080" fill="none"/><path d="M153.5 530.5 L163.5 530.5" stroke="#000080"/><path d="M158.5 525.5 L158.5 535.5" stroke="#000080"/><path d="M153.5 551.5 L163.5 551.5" stroke="#000080"/><circle cx="421.5" cy="658.5" r="17.5" stroke="#000080" fill="none"/><path d="M416.5 648.5 L426.5 648.5" stroke="#000080"/><path d="M421.5 643.5 L421.5 653.5" stroke="#000080"/><path d="M416.5 669.5 L426.5 669.5" stroke="#000080"/><circle cx="466.5" cy="658.5" r="17.5" stroke="#000080" fill="none"/><path d="M461.5 648.5 L471.5 648.5" stroke="#000080"/><path d="M466.5 643.5 L466.5 653.5" stroke="#000080"/><path d="M461.5 669.5 L471.5 669.5" stroke="#000080"/><path d="M43.5 383.5 L61.5 383.5 L69.5 391.5 L61.5 398.5 L43.5 398.5 Z" stroke="#0000FF" fill="none"/><text x="46.4" y="396" textLength="13.6" lengthAdjust="spacingAndGlyphs" style="font:bold 12px 'Liberation Sans', sans-serif" fill="#000000" stroke="none">IN</text><path d="M51.5 329.5 L79.5 329.5 L87.5 337.5 L79.5 344.5 L51.5 344.5 Z" stroke="#0000FF" fill="none"/><text x="54.4" y="342" textLength="23.6" lengthAdjust="spacingAndGlyphs" style="font:bold 12px 'Liberation Sans', sans-serif" fill="#000000" stroke="none">CLK</text><path d="M178.5 456.5 L206.5 456.5 L214.5 464.5 L206.5 471.5 L178.5 471.5 Z" stroke="#0000FF" fill="none"/><text x="181.4" y="469" textLength="23.6" lengthAdjust="spacingAndGlyphs" style="font:bold 12px 'Liberation Sans', sans-serif" fill="#000000" stroke="none">CLK</text><path d="M566.5 383.5 L595.5 383.5 L603.5 391.5 L595.5 398.5 L566.5 398.5 Z" stroke="#0000FF" fill="none"/><text x="567.4" y="396" textLength="24.6" lengthAdjust="spacingAndGlyphs" style="font:bold 12px 'Liberation Sans', sans-serif" fill="#000000" stroke="none">OUT</text><path d="M113.5 491.5 L131.5 491.5 L139.5 499.5 L131.5 506.5 L113.5 506.5 Z" stroke="#0000FF" fill="none"/><text x="114.4" y="504" textLength="13.6" lengthAdjust="spacingAndGlyphs" style="font:bold 12px 'Liberation Sans', sans-serif" fill="#000000" stroke="none">IN</text><path d="M176.5 491.5 L204.5 491.5 L212.5 499.5 L204.5 506.5 L176.5 506.5 Z" stroke="#0000FF" fill="none"/><text x="177.4" y="504" textLength="23.6" lengthAdjust="spacingAndGlyphs" style="font:bold 12px 'Liberation Sans', sans-serif" fill="#000000" stroke="none">CLK</text><path d="M151.5 609.5 L169.5 609.5 L177.5 617.5 L169.5 624.5 L151.5 624.5 Z" stroke="#0000FF" fill="none"/><text x="154.4" y="622" textLength="14.6" lengthAdjust="spacingAndGlyphs" style="font:bold 12px 'Liberation Sans', sans-serif" fill="#000000" stroke="none">IN</text><path d="M348.5 645.5 L374.5 645.5 L382.5 653.5 L374.5 660.5 L348.5 660.5 Z" stroke="#0000FF" fill="none"/><text x="349.4" y="658" textLength="21.6" lengthAdjust="spacingAndGlyphs" style="font:bold 12px 'Liberation Sans', sans-serif" fill="#000000" stroke="none">INV</text><path d="M169.5 328.5 L184.5 328.5 L184.5 355.5 L177.5 363.5 L169.5 355.5 Z" stroke="#0000FF" fill="none"/><text x="182" y="355.6" textLength="23.6" lengthAdjust="spacingAndGlyphs" transform="rotate(-90 182 355.6)" style="font:bold 12px 'Liberation Sans', sans-serif" fill="#000000" stroke="none">CLK</text><path d="M423.5 337.5 L438.5 337.5 L438.5 364.5 L431.5 372.5 L423.5 364.5 Z" stroke="#0000FF" fill="none"/><text x="436" y="363.6" textLength="23.6" lengthAdjust="spacingAndGlyphs" transform="rotate(-90 436 363.6)" style="font:bold 12px 'Liberation Sans', sans-serif" fill="#000000" stroke="none">CLK</text><path d="M359.5 390.5 L374.5 390.5 L374.5 363.5 L367.5 355.5 L359.5 363.5 Z" stroke="#0000FF" fill="none"/><text x="372" y="386.6" textLength="23.6" lengthAdjust="spacingAndGlyphs" transform="rotate(-90 372 386.6)" style="font:bold 12px 'Liberation Sans', sans-serif" fill="#000000" stroke="none">CLK</text><text x="102.4" y="283" textLength="28.6" lengthAdjust="spacingAndGlyphs" style="font:bold 12px 'Liberation Sans', sans-serif" fill="#000000" stroke="none">SWN</text><text x="125.4" y="305" textLength="16.6" lengthAdjust="spacingAndGlyphs" style="font:bold 12px 'Liberation Sans', sans-serif" fill="#000000" stroke="none">S2</text><text x="189.4" y="271" textLength="16.6" lengthAdjust="spacingAndGlyphs" style="font:bold 12px 'Liberation Sans', sans-serif" fill="#000000" stroke="none">R1</text><text x="213.4" y="271" textLength="22.6" lengthAdjust="spacingAndGlyphs" style="font:bold 12px 'Liberation Sans', sans-serif" fill="#000000" stroke="none">10k</text><text x="185.4" y="306" textLength="44.6" lengthAdjust="spacingAndGlyphs" style="font:bold 12px 'Liberation Sans', sans-serif" fill="#000000" stroke="none">C3 10p</text><text x="80.4" y="378" textLength="17.6" lengthAdjust="spacingAndGlyphs" style="font:bold 12px 'Liberation Sans', sans-serif" fill="#000000" stroke="none">R3</text><text x="78.4" y="412" textLength="22.6" lengthAdjust="spacingAndGlyphs" style="font:bold 12px 'Liberation Sans', sans-serif" fill="#000000" stroke="none">10k</text><text x="272.4" y="342" textLength="47.6" lengthAdjust="spacingAndGlyphs" style="font:bold 12px 'Liberation Sans', sans-serif" fill="#000000" stroke="none">LT1055</text><text x="304.4" y="409" textLength="16.6" lengthAdjust="spacingAndGlyphs" style="font:bold 12px 'Liberation Sans', sans-serif" fill="#000000" stroke="none">U2</text><text x="346.4" y="318" textLength="15.6" lengthAdjust="spacingAndGlyphs" style="font:bold 12px 'Liberation Sans', sans-serif" fill="#000000" stroke="none">S1</text><text x="343.4" y="346" textLength="20.6" lengthAdjust="spacingAndGlyphs" style="font:bold 12px 'Liberation Sans', sans-serif" fill="#000000" stroke="none">SW</text><text x="503.4" y="315" textLength="16.6" lengthAdjust="spacingAndGlyphs" style="font:bold 12px 'Liberation Sans', sans-serif" fill="#000000" stroke="none">C1</text><text x="496.4" y="348" textLength="31.6" lengthAdjust="spacingAndGlyphs" style="font:bold 12px 'Liberation Sans', sans-serif" fill="#000000" stroke="none">100p</text><text x="520.4" y="377" textLength="16.6" lengthAdjust="spacingAndGlyphs" style="font:bold 12px 'Liberation Sans', sans-serif" fill="#000000" stroke="none">U1</text><text x="520.4" y="414" textLength="46.6" lengthAdjust="spacingAndGlyphs" style="font:bold 12px 'Liberation Sans', sans-serif" fill="#000000" stroke="none">LT1055</text><text x="504.4" y="441" textLength="15.6" lengthAdjust="spacingAndGlyphs" style="font:bold 12px 'Liberation Sans', sans-serif" fill="#000000" stroke="none">C2</text><text x="501.4" y="454" textLength="31.6" lengthAdjust="spacingAndGlyphs" style="font:bold 12px 'Liberation Sans', sans-serif" fill="#000000" stroke="none">100p</text><text x="247.4" y="429" textLength="16.6" lengthAdjust="spacingAndGlyphs" style="font:bold 12px 'Liberation Sans', sans-serif" fill="#000000" stroke="none">S6</text><text x="252.4" y="477" textLength="28.6" lengthAdjust="spacingAndGlyphs" style="font:bold 12px 'Liberation Sans', sans-serif" fill="#000000" stroke="none">SWN</text><text x="114.4" y="550" textLength="15.6" lengthAdjust="spacingAndGlyphs" style="font:bold 12px 'Liberation Sans', sans-serif" fill="#000000" stroke="none">V1</text><text x="177.4" y="545" textLength="16.6" lengthAdjust="spacingAndGlyphs" style="font:bold 12px 'Liberation Sans', sans-serif" fill="#000000" stroke="none">V2</text><text x="189.4" y="605" textLength="17.6" lengthAdjust="spacingAndGlyphs" style="font:bold 12px 'Liberation Sans', sans-serif" fill="#000000" stroke="none">R4</text><text x="191.4" y="638" textLength="14.6" lengthAdjust="spacingAndGlyphs" style="font:bold 12px 'Liberation Sans', sans-serif" fill="#000000" stroke="none">1k</text><text x="234.4" y="605" textLength="17.6" lengthAdjust="spacingAndGlyphs" style="font:bold 12px 'Liberation Sans', sans-serif" fill="#000000" stroke="none">R2</text><text x="236.4" y="638" textLength="14.6" lengthAdjust="spacingAndGlyphs" style="font:bold 12px 'Liberation Sans', sans-serif" fill="#000000" stroke="none">1k</text><text x="310.4" y="640" textLength="17.6" lengthAdjust="spacingAndGlyphs" style="font:bold 12px 'Liberation Sans', sans-serif" fill="#000000" stroke="none">U3</text><text x="310.4" y="677" textLength="47.6" lengthAdjust="spacingAndGlyphs" style="font:bold 12px 'Liberation Sans', sans-serif" fill="#000000" stroke="none">LT1055</text><text x="434.4" y="640" textLength="16.6" lengthAdjust="spacingAndGlyphs" style="font:bold 12px 'Liberation Sans', sans-serif" fill="#000000" stroke="none">V4</text><text x="435.4" y="686" textLength="15.6" lengthAdjust="spacingAndGlyphs" style="font:bold 12px 'Liberation Sans', sans-serif" fill="#000000" stroke="none">15</text><text x="479.4" y="640" textLength="16.6" lengthAdjust="spacingAndGlyphs" style="font:bold 12px 'Liberation Sans', sans-serif" fill="#000000" stroke="none">V5</text><text x="479.4" y="686" textLength="21.6" lengthAdjust="spacingAndGlyphs" style="font:bold 12px 'Liberation Sans', sans-serif" fill="#000000" stroke="none">-15</text><text x="253.4" y="504" textLength="52.6" lengthAdjust="spacingAndGlyphs" style="font:normal 12.5px 'Liberation Sans', sans-serif" fill="#000000" stroke="#000000" stroke-width="0.3">.tran 4m</text><text x="253.4" y="518" textLength="327.6" lengthAdjust="spacingAndGlyphs" style="font:normal 12.5px 'Liberation Sans', sans-serif" fill="#000000" stroke="#000000" stroke-width="0.3">.model SW SW(Ron=50 Roff=10meg Vt=2.5 Vh=-.4)</text><text x="253.4" y="531" textLength="335.6" lengthAdjust="spacingAndGlyphs" style="font:normal 12.5px 'Liberation Sans', sans-serif" fill="#000000" stroke="#000000" stroke-width="0.3">.model SWN SW(Roff=50 Ron=10meg Vt=2.5 Vh=-.4)</text><text x="204.4" y="570" textLength="125.6" lengthAdjust="spacingAndGlyphs" style="font:normal 12.5px 'Liberation Sans', sans-serif" fill="#000000" stroke="#000000" stroke-width="0.3">SINE(0 5 1k 0 0 0 0)</text><text x="203.4" y="587" textLength="192.6" lengthAdjust="spacingAndGlyphs" style="font:normal 12.5px 'Liberation Sans', sans-serif" fill="#000000" stroke="#000000" stroke-width="0.3">PULSE(0 5 0 1u 1u 399u 800u)</text><text x="172" y="425.6" textLength="21.6" lengthAdjust="spacingAndGlyphs" transform="rotate(-90 172 425.6)" style="font:bold 12px 'Liberation Sans', sans-serif" fill="#000000" stroke="none">SW</text><text x="218" y="420.6" textLength="16.6" lengthAdjust="spacingAndGlyphs" transform="rotate(-90 218 420.6)" style="font:bold 12px 'Liberation Sans', sans-serif" fill="#000000" stroke="none">S5</text><text x="436" y="442.6" textLength="20.6" lengthAdjust="spacingAndGlyphs" transform="rotate(-90 436 442.6)" style="font:bold 12px 'Liberation Sans', sans-serif" fill="#000000" stroke="none">SW</text><text x="451" y="438.6" textLength="16.6" lengthAdjust="spacingAndGlyphs" transform="rotate(-90 451 438.6)" style="font:bold 12px 'Liberation Sans', sans-serif" fill="#000000" stroke="none">S3</text><text x="298.5" y="363.5" textLength="16" lengthAdjust="spacingAndGlyphs" transform="rotate(-90 298.5 363.5)" style="font:bold 12px 'Liberation Sans', sans-serif" fill="#000000" stroke="none">V+</text><text x="298.5" y="413.5" textLength="12" lengthAdjust="spacingAndGlyphs" transform="rotate(-90 298.5 413.5)" style="font:bold 12px 'Liberation Sans', sans-serif" fill="#000000" stroke="none">V-</text><text x="516.5" y="372.5" textLength="16" lengthAdjust="spacingAndGlyphs" transform="rotate(-90 516.5 372.5)" style="font:bold 12px 'Liberation Sans', sans-serif" fill="#000000" stroke="none">V+</text><text x="516.5" y="422.5" textLength="12" lengthAdjust="spacingAndGlyphs" transform="rotate(-90 516.5 422.5)" style="font:bold 12px 'Liberation Sans', sans-serif" fill="#000000" stroke="none">V-</text><text x="307.5" y="635.5" textLength="16" lengthAdjust="spacingAndGlyphs" transform="rotate(-90 307.5 635.5)" style="font:bold 12px 'Liberation Sans', sans-serif" fill="#000000" stroke="none">V+</text><text x="307.5" y="685.5" textLength="12" lengthAdjust="spacingAndGlyphs" transform="rotate(-90 307.5 685.5)" style="font:bold 12px 'Liberation Sans', sans-serif" fill="#000000" stroke="none">V-</text><text x="425.5" y="626.5" textLength="16" lengthAdjust="spacingAndGlyphs" transform="rotate(-90 425.5 626.5)" style="font:bold 12px 'Liberation Sans', sans-serif" fill="#000000" stroke="none">V+</text><text x="470.5" y="626.5" textLength="12" lengthAdjust="spacingAndGlyphs" transform="rotate(-90 470.5 626.5)" style="font:bold 12px 'Liberation Sans', sans-serif" fill="#000000" stroke="none">V-</text></g></svg><svg style="position:absolute;left:0;top:0" width="1367" height="872" viewBox="0 0 1367 872"><defs><clipPath id="cp"><rect x="689" y="126" width="665" height="716"/></clipPath></defs><g clip-path="url(#cp)" shape-rendering="crispEdges" stroke-width="1"><path d="M717.5 144.5 H1336.5 V816.5 H717.5 Z" stroke="#000" fill="none"/><path d="M710 144.5 H717" stroke="#000"/><text x="709.5" y="149" text-anchor="end" style="font:13.8px 'Liberation Sans', sans-serif" fill="#000">5V</text><path d="M710 211.5 H717" stroke="#000"/><text x="709.5" y="216" text-anchor="end" style="font:13.8px 'Liberation Sans', sans-serif" fill="#000">4V</text><path d="M710 278.5 H717" stroke="#000"/><text x="709.5" y="283" text-anchor="end" style="font:13.8px 'Liberation Sans', sans-serif" fill="#000">3V</text><path d="M710 346.5 H717" stroke="#000"/><text x="709.5" y="351" text-anchor="end" style="font:13.8px 'Liberation Sans', sans-serif" fill="#000">2V</text><path d="M710 413.5 H717" stroke="#000"/><text x="709.5" y="418" text-anchor="end" style="font:13.8px 'Liberation Sans', sans-serif" fill="#000">1V</text><path d="M710 480.5 H717" stroke="#000"/><text x="709.5" y="485" text-anchor="end" style="font:13.8px 'Liberation Sans', sans-serif" fill="#000">0V</text><path d="M710 547.5 H717" stroke="#000"/><text x="709.5" y="552" text-anchor="end" style="font:13.8px 'Liberation Sans', sans-serif" fill="#000">-1V</text><path d="M710 614.5 H717" stroke="#000"/><text x="709.5" y="619" text-anchor="end" style="font:13.8px 'Liberation Sans', sans-serif" fill="#000">-2V</text><path d="M710 682.5 H717" stroke="#000"/><text x="709.5" y="687" text-anchor="end" style="font:13.8px 'Liberation Sans', sans-serif" fill="#000">-3V</text><path d="M710 749.5 H717" stroke="#000"/><text x="709.5" y="754" text-anchor="end" style="font:13.8px 'Liberation Sans', sans-serif" fill="#000">-4V</text><path d="M710 816.5 H717" stroke="#000"/><text x="709.5" y="821" text-anchor="end" style="font:13.8px 'Liberation Sans', sans-serif" fill="#000">-5V</text><path d="M717.5 817 V824" stroke="#000"/><text x="717.3" y="836.8" text-anchor="middle" style="font:13.8px 'Liberation Sans', sans-serif" fill="#000">0.0ms</text><path d="M779.5 817 V824" stroke="#000"/><text x="779.3" y="836.8" text-anchor="middle" style="font:13.8px 'Liberation Sans', sans-serif" fill="#000">0.4ms</text><path d="M841.5 817 V824" stroke="#000"/><text x="841.3" y="836.8" text-anchor="middle" style="font:13.8px 'Liberation Sans', sans-serif" fill="#000">0.8ms</text><path d="M903.5 817 V824" stroke="#000"/><text x="903.3" y="836.8" text-anchor="middle" style="font:13.8px 'Liberation Sans', sans-serif" fill="#000">1.2ms</text><path d="M965.5 817 V824" stroke="#000"/><text x="965.3" y="836.8" text-anchor="middle" style="font:13.8px 'Liberation Sans', sans-serif" fill="#000">1.6ms</text><path d="M1026.5 817 V824" stroke="#000"/><text x="1026.3" y="836.8" text-anchor="middle" style="font:13.8px 'Liberation Sans', sans-serif" fill="#000">2.0ms</text><path d="M1088.5 817 V824" stroke="#000"/><text x="1088.3" y="836.8" text-anchor="middle" style="font:13.8px 'Liberation Sans', sans-serif" fill="#000">2.4ms</text><path d="M1150.5 817 V824" stroke="#000"/><text x="1150.3" y="836.8" text-anchor="middle" style="font:13.8px 'Liberation Sans', sans-serif" fill="#000">2.8ms</text><path d="M1212.5 817 V824" stroke="#000"/><text x="1212.3" y="836.8" text-anchor="middle" style="font:13.8px 'Liberation Sans', sans-serif" fill="#000">3.2ms</text><path d="M1274.5 817 V824" stroke="#000"/><text x="1274.3" y="836.8" text-anchor="middle" style="font:13.8px 'Liberation Sans', sans-serif" fill="#000">3.6ms</text><path d="M1336.5 817 V824" stroke="#000"/><text x="1336.3" y="836.8" text-anchor="middle" style="font:13.8px 'Liberation Sans', sans-serif" fill="#000">4.0ms</text><text x="854" y="139" style="font:13.8px 'Liberation Sans', sans-serif" fill="#00FF00">V(inv)</text><text x="1161" y="139" style="font:13.8px 'Liberation Sans', sans-serif" fill="#0000FF">V(out)</text><polyline points="717.50,480.50 717.75,483.88 718.00,487.26 718.24,490.63 718.49,494.01 718.74,497.38 718.99,500.75 719.23,504.13 719.48,507.49 719.73,510.86 719.98,514.22 720.22,517.58 720.47,520.94 720.72,524.29 720.97,527.63 721.21,530.98 721.46,534.31 721.71,537.64 721.96,540.97 722.20,544.29 722.45,547.60 722.70,550.91 722.95,554.21 723.19,557.50 723.44,560.78 723.69,564.06 723.94,567.33 724.19,570.59 724.43,573.84 724.68,577.08 724.93,580.31 725.18,583.53 725.42,586.74 725.67,589.94 725.92,593.12 726.17,596.30 726.41,599.47 726.66,602.62 726.91,605.76 727.16,608.89 727.40,612.00 727.65,615.10 727.90,618.19 728.15,621.27 728.39,624.33 728.64,627.37 728.89,630.40 729.14,633.42 729.38,636.42 729.63,639.40 729.88,642.37 730.13,645.32 730.38,648.26 730.62,651.17 730.87,654.08 731.12,656.96 731.37,659.82 731.61,662.67 731.86,665.50 732.11,668.31 732.36,671.10 732.60,673.87 732.85,676.63 733.10,679.36 733.35,682.07 733.59,684.76 733.84,687.44 734.09,690.09 734.34,692.72 734.58,695.32 734.83,697.91 735.08,700.48 735.33,703.02 735.57,705.54 735.82,708.03 736.07,710.51 736.32,712.96 736.57,715.39 736.81,717.79 737.06,720.17 737.31,722.52 737.56,724.85 737.80,727.16 738.05,729.44 738.30,731.70 738.55,733.93 738.79,736.13 739.04,738.31 739.29,740.47 739.54,742.59 739.78,744.69 740.03,746.77 740.28,748.81 740.53,750.83 740.77,752.83 741.02,754.79 741.27,756.73 741.52,758.64 741.76,760.52 742.01,762.37 742.26,764.19 742.51,765.99 742.76,767.76 743.00,769.49 743.25,771.20 743.50,772.88 743.75,774.53 743.99,776.15 744.24,777.74 744.49,779.30 744.74,780.83 744.98,782.33 745.23,783.80 745.48,785.24 745.73,786.64 745.97,788.02 746.22,789.37 746.47,790.68 746.72,791.96 746.96,793.21 747.21,794.43 747.46,795.62 747.71,796.78 747.95,797.90 748.20,799.00 748.45,800.05 748.70,801.08 748.95,802.08 749.19,803.04 749.44,803.97 749.69,804.87 749.94,805.73 750.18,806.56 750.43,807.36 750.68,808.13 750.93,808.86 751.17,809.56 751.42,810.23 751.67,810.86 751.92,811.46 752.16,812.03 752.41,812.56 752.66,813.06 752.91,813.52 753.15,813.96 753.40,814.35 753.65,814.72 753.90,815.05 754.14,815.35 754.39,815.61 754.64,815.84 754.89,816.03 755.14,816.19 755.38,816.32 755.63,816.41 755.88,816.47 756.13,816.50 756.37,816.49 756.62,816.45 756.87,816.37 757.12,816.26 757.36,816.12 757.61,815.94 757.86,815.73 758.11,815.48 758.35,815.20 758.60,814.89 758.85,814.54 759.10,814.16 759.34,813.74 759.59,813.30 759.84,812.81 760.09,812.30 760.33,811.75 760.58,811.16 760.83,810.55 761.08,809.90 761.33,809.22 761.57,808.50 761.82,807.75 762.07,806.97 762.32,806.15 762.56,805.30 762.81,804.42 763.06,803.51 763.31,802.56 763.55,801.58 763.80,800.57 764.05,799.53 764.30,798.45 764.54,797.34 764.79,796.20 765.04,795.03 765.29,793.83 765.53,792.59 765.78,791.33 766.03,790.03 766.28,788.70 766.52,787.34 766.77,785.94 767.02,784.52 767.27,783.07 767.52,781.58 767.76,780.07 768.01,778.52 768.26,776.95 768.51,775.34 768.75,773.71 769.00,772.05 769.25,770.35 769.50,768.63 769.74,766.88 769.99,765.10 770.24,763.29 770.49,761.45 770.73,759.58 770.98,757.69 771.23,755.76 771.48,753.81 771.72,751.83 771.97,749.83 772.22,747.79 772.47,745.73 772.71,743.65 772.96,741.53 773.21,739.39 773.46,737.23 773.71,735.03 773.95,732.82 774.20,730.57 774.45,728.30 774.70,726.01 774.94,723.69 775.19,721.35 775.44,718.98 775.69,716.59 775.93,714.18 776.18,711.74 776.43,709.27 776.68,706.79 776.92,704.28 777.17,701.75 777.42,699.20 777.67,696.62 777.91,694.02 778.16,691.40 778.41,688.76 778.66,686.10 778.90,683.42 779.15,680.72 779.40,678.00 779.65,675.25 779.90,672.49 780.14,669.71 780.39,666.91 780.64,664.09 780.89,661.25 781.13,658.39 781.38,655.52 781.63,652.63 781.88,649.72 782.12,646.79 782.37,643.85 782.62,640.89 782.87,637.91 783.11,634.92 783.36,631.91 783.61,628.89 783.86,625.85 784.10,622.80 784.35,619.73 784.60,616.65 784.85,613.55 785.09,610.45 785.34,607.32 785.59,604.19 785.84,601.04 786.09,597.88 786.33,594.71 786.58,591.53 786.83,588.34 787.08,585.13 787.32,581.92 787.57,578.69 787.82,575.46 788.07,572.21 788.31,568.96 788.56,565.69 788.81,562.42 789.06,559.14 789.30,555.85 789.55,552.56 789.80,549.26 790.05,545.95 790.29,542.63 790.54,539.31 790.79,535.98 791.04,532.64 791.28,529.31 791.53,525.96 791.78,522.61 792.03,519.26 792.28,515.90 792.52,512.54 792.77,509.18 793.02,505.81 793.27,502.44 793.51,499.07 793.76,495.70 794.01,492.32 794.26,488.94 794.50,485.57 794.75,482.19 795.00,478.81 795.25,475.43 795.49,472.06 795.74,468.68 795.99,465.30 796.24,461.93 796.48,458.56 796.73,455.19 796.98,451.82 797.23,448.46 797.47,445.10 797.72,441.74 797.97,438.39 798.22,435.04 798.47,431.69 798.71,428.36 798.96,425.02 799.21,421.69 799.46,418.37 799.70,415.05 799.95,411.74 800.20,408.44 800.45,405.15 800.69,401.86 800.94,398.58 801.19,395.31 801.44,392.04 801.68,388.79 801.93,385.54 802.18,382.31 802.43,379.08 802.67,375.87 802.92,372.66 803.17,369.47 803.42,366.29 803.66,363.12 803.91,359.96 804.16,356.81 804.41,353.68 804.66,350.55 804.90,347.45 805.15,344.35 805.40,341.27 805.65,338.20 805.89,335.15 806.14,332.11 806.39,329.09 806.64,326.08 806.88,323.09 807.13,320.11 807.38,317.15 807.63,314.21 807.87,311.28 808.12,308.37 808.37,305.48 808.62,302.61 808.86,299.75 809.11,296.91 809.36,294.09 809.61,291.29 809.85,288.51 810.10,285.75 810.35,283.00 810.60,280.28 810.85,277.58 811.09,274.90 811.34,272.24 811.59,269.60 811.84,266.98 812.08,264.38 812.33,261.80 812.58,259.25 812.83,256.72 813.07,254.21 813.32,251.73 813.57,249.26 813.82,246.82 814.06,244.41 814.31,242.02 814.56,239.65 814.81,237.31 815.05,234.99 815.30,232.70 815.55,230.43 815.80,228.18 816.04,225.97 816.29,223.77 816.54,221.61 816.79,219.47 817.04,217.35 817.28,215.27 817.53,213.21 817.78,211.17 818.03,209.17 818.27,207.19 818.52,205.24 818.77,203.31 819.02,201.42 819.26,199.55 819.51,197.71 819.76,195.90 820.01,194.12 820.25,192.37 820.50,190.65 820.75,188.95 821.00,187.29 821.24,185.66 821.49,184.05 821.74,182.48 821.99,180.93 822.23,179.42 822.48,177.93 822.73,176.48 822.98,175.06 823.23,173.66 823.47,172.30 823.72,170.97 823.97,169.67 824.22,168.41 824.46,167.17 824.71,165.97 824.96,164.80 825.21,163.66 825.45,162.55 825.70,161.47 825.95,160.43 826.20,159.42 826.44,158.44 826.69,157.49 826.94,156.58 827.19,155.70 827.43,154.85 827.68,154.03 827.93,153.25 828.18,152.50 828.42,151.78 828.67,151.10 828.92,150.45 829.17,149.84 829.42,149.25 829.66,148.70 829.91,148.19 830.16,147.70 830.41,147.26 830.65,146.84 830.90,146.46 831.15,146.11 831.40,145.80 831.64,145.52 831.89,145.27 832.14,145.06 832.39,144.88 832.63,144.74 832.88,144.63 833.13,144.55 833.38,144.51 833.62,144.50 833.87,144.53 834.12,144.59 834.37,144.68 834.61,144.81 834.86,144.97 835.11,145.16 835.36,145.39 835.61,145.65 835.85,145.95 836.10,146.28 836.35,146.65 836.60,147.04 836.84,147.48 837.09,147.94 837.34,148.44 837.59,148.97 837.83,149.54 838.08,150.14 838.33,150.77 838.58,151.44 838.82,152.14 839.07,152.87 839.32,153.64 839.57,154.44 839.81,155.27 840.06,156.13 840.31,157.03 840.56,157.96 840.80,158.92 841.05,159.92 841.30,160.95 841.55,162.00 841.80,163.10 842.04,164.22 842.29,165.38 842.54,166.57 842.79,167.79 843.03,169.04 843.28,170.32 843.53,171.63 843.78,172.98 844.02,174.36 844.27,175.76 844.52,177.20 844.77,178.67 845.01,180.17 845.26,181.70 845.51,183.26 845.76,184.85 846.00,186.47 846.25,188.12 846.50,189.80 846.75,191.51 846.99,193.24 847.24,195.01 847.49,196.81 847.74,198.63 847.99,200.48 848.23,202.36 848.48,204.27 848.73,206.21 848.98,208.17 849.22,210.17 849.47,212.19 849.72,214.23 849.97,216.31 850.21,218.41 850.46,220.53 850.71,222.69 850.96,224.87 851.20,227.07 851.45,229.30 851.70,231.56 851.95,233.84 852.19,236.15 852.44,238.48 852.69,240.83 852.94,243.21 853.18,245.61 853.43,248.04 853.68,250.49 853.93,252.97 854.18,255.46 854.42,257.98 854.67,260.52 854.92,263.09 855.17,265.68 855.41,268.28 855.66,270.91 855.91,273.56 856.16,276.24 856.40,278.93 856.65,281.64 856.90,284.37 857.15,287.13 857.39,289.90 857.64,292.69 857.89,295.50 858.14,298.33 858.38,301.18 858.63,304.04 858.88,306.92 859.13,309.83 859.37,312.74 859.62,315.68 859.87,318.63 860.12,321.60 860.37,324.58 860.61,327.58 860.86,330.60 861.11,333.63 861.36,336.67 861.60,339.73 861.85,342.81 862.10,345.90 862.35,349.00 862.59,352.11 862.84,355.24 863.09,358.38 863.34,361.53 863.58,364.70 863.83,367.88 864.08,371.06 864.33,374.26 864.57,377.47 864.82,380.69 865.07,383.92 865.32,387.16 865.56,390.41 865.81,393.67 866.06,396.94 866.31,400.22 866.56,403.50 866.80,406.79 867.05,410.09 867.30,413.40 867.55,416.71 867.79,420.03 868.04,423.36 868.29,426.69 868.54,430.02 868.78,433.37 869.03,436.71 869.28,440.06 869.53,443.42 869.77,446.78 870.02,450.14 870.27,453.51 870.52,456.87 870.76,460.25 871.01,463.62 871.26,466.99 871.51,470.37 871.75,473.74 872.00,477.12 872.25,480.50 872.50,483.88 872.75,487.26 872.99,490.63 873.24,494.01 873.49,497.38 873.74,500.75 873.98,504.13 874.23,507.49 874.48,510.86 874.73,514.22 874.97,517.58 875.22,520.94 875.47,524.29 875.72,527.63 875.96,530.98 876.21,534.31 876.46,537.64 876.71,540.97 876.95,544.29 877.20,547.60 877.45,550.91 877.70,554.21 877.94,557.50 878.19,560.78 878.44,564.06 878.69,567.33 878.94,570.59 879.18,573.84 879.43,577.08 879.68,580.31 879.93,583.53 880.17,586.74 880.42,589.94 880.67,593.12 880.92,596.30 881.16,599.47 881.41,602.62 881.66,605.76 881.91,608.89 882.15,612.00 882.40,615.10 882.65,618.19 882.90,621.27 883.14,624.33 883.39,627.37 883.64,630.40 883.89,633.42 884.13,636.42 884.38,639.40 884.63,642.37 884.88,645.32 885.13,648.26 885.37,651.17 885.62,654.08 885.87,656.96 886.12,659.82 886.36,662.67 886.61,665.50 886.86,668.31 887.11,671.10 887.35,673.87 887.60,676.63 887.85,679.36 888.10,682.07 888.34,684.76 888.59,687.44 888.84,690.09 889.09,692.72 889.33,695.32 889.58,697.91 889.83,700.48 890.08,703.02 890.32,705.54 890.57,708.03 890.82,710.51 891.07,712.96 891.32,715.39 891.56,717.79 891.81,720.17 892.06,722.52 892.31,724.85 892.55,727.16 892.80,729.44 893.05,731.70 893.30,733.93 893.54,736.13 893.79,738.31 894.04,740.47 894.29,742.59 894.53,744.69 894.78,746.77 895.03,748.81 895.28,750.83 895.52,752.83 895.77,754.79 896.02,756.73 896.27,758.64 896.51,760.52 896.76,762.37 897.01,764.19 897.26,765.99 897.51,767.76 897.75,769.49 898.00,771.20 898.25,772.88 898.50,774.53 898.74,776.15 898.99,777.74 899.24,779.30 899.49,780.83 899.73,782.33 899.98,783.80 900.23,785.24 900.48,786.64 900.72,788.02 900.97,789.37 901.22,790.68 901.47,791.96 901.71,793.21 901.96,794.43 902.21,795.62 902.46,796.78 902.70,797.90 902.95,799.00 903.20,800.05 903.45,801.08 903.70,802.08 903.94,803.04 904.19,803.97 904.44,804.87 904.69,805.73 904.93,806.56 905.18,807.36 905.43,808.13 905.68,808.86 905.92,809.56 906.17,810.23 906.42,810.86 906.67,811.46 906.91,812.03 907.16,812.56 907.41,813.06 907.66,813.52 907.90,813.96 908.15,814.35 908.40,814.72 908.65,815.05 908.89,815.35 909.14,815.61 909.39,815.84 909.64,816.03 909.89,816.19 910.13,816.32 910.38,816.41 910.63,816.47 910.88,816.50 911.12,816.49 911.37,816.45 911.62,816.37 911.87,816.26 912.11,816.12 912.36,815.94 912.61,815.73 912.86,815.48 913.10,815.20 913.35,814.89 913.60,814.54 913.85,814.16 914.09,813.74 914.34,813.30 914.59,812.81 914.84,812.30 915.08,811.75 915.33,811.16 915.58,810.55 915.83,809.90 916.08,809.22 916.32,808.50 916.57,807.75 916.82,806.97 917.07,806.15 917.31,805.30 917.56,804.42 917.81,803.51 918.06,802.56 918.30,801.58 918.55,800.57 918.80,799.53 919.05,798.45 919.29,797.34 919.54,796.20 919.79,795.03 920.04,793.83 920.28,792.59 920.53,791.33 920.78,790.03 921.03,788.70 921.27,787.34 921.52,785.94 921.77,784.52 922.02,783.07 922.27,781.58 922.51,780.07 922.76,778.52 923.01,776.95 923.26,775.34 923.50,773.71 923.75,772.05 924.00,770.35 924.25,768.63 924.49,766.88 924.74,765.10 924.99,763.29 925.24,761.45 925.48,759.58 925.73,757.69 925.98,755.76 926.23,753.81 926.47,751.83 926.72,749.83 926.97,747.79 927.22,745.73 927.46,743.65 927.71,741.53 927.96,739.39 928.21,737.23 928.46,735.03 928.70,732.82 928.95,730.57 929.20,728.30 929.45,726.01 929.69,723.69 929.94,721.35 930.19,718.98 930.44,716.59 930.68,714.18 930.93,711.74 931.18,709.27 931.43,706.79 931.67,704.28 931.92,701.75 932.17,699.20 932.42,696.62 932.66,694.02 932.91,691.40 933.16,688.76 933.41,686.10 933.65,683.42 933.90,680.72 934.15,678.00 934.40,675.25 934.65,672.49 934.89,669.71 935.14,666.91 935.39,664.09 935.64,661.25 935.88,658.39 936.13,655.52 936.38,652.63 936.63,649.72 936.87,646.79 937.12,643.85 937.37,640.89 937.62,637.91 937.86,634.92 938.11,631.91 938.36,628.89 938.61,625.85 938.85,622.80 939.10,619.73 939.35,616.65 939.60,613.55 939.84,610.45 940.09,607.32 940.34,604.19 940.59,601.04 940.84,597.88 941.08,594.71 941.33,591.53 941.58,588.34 941.83,585.13 942.07,581.92 942.32,578.69 942.57,575.46 942.82,572.21 943.06,568.96 943.31,565.69 943.56,562.42 943.81,559.14 944.05,555.85 944.30,552.56 944.55,549.26 944.80,545.95 945.04,542.63 945.29,539.31 945.54,535.98 945.79,532.64 946.03,529.31 946.28,525.96 946.53,522.61 946.78,519.26 947.03,515.90 947.27,512.54 947.52,509.18 947.77,505.81 948.02,502.44 948.26,499.07 948.51,495.70 948.76,492.32 949.01,488.94 949.25,485.57 949.50,482.19 949.75,478.81 950.00,475.43 950.24,472.06 950.49,468.68 950.74,465.30 950.99,461.93 951.23,458.56 951.48,455.19 951.73,451.82 951.98,448.46 952.22,445.10 952.47,441.74 952.72,438.39 952.97,435.04 953.22,431.69 953.46,428.36 953.71,425.02 953.96,421.69 954.21,418.37 954.45,415.05 954.70,411.74 954.95,408.44 955.20,405.15 955.44,401.86 955.69,398.58 955.94,395.31 956.19,392.04 956.43,388.79 956.68,385.54 956.93,382.31 957.18,379.08 957.42,375.87 957.67,372.66 957.92,369.47 958.17,366.29 958.41,363.12 958.66,359.96 958.91,356.81 959.16,353.68 959.41,350.55 959.65,347.45 959.90,344.35 960.15,341.27 960.40,338.20 960.64,335.15 960.89,332.11 961.14,329.09 961.39,326.08 961.63,323.09 961.88,320.11 962.13,317.15 962.38,314.21 962.62,311.28 962.87,308.37 963.12,305.48 963.37,302.61 963.61,299.75 963.86,296.91 964.11,294.09 964.36,291.29 964.60,288.51 964.85,285.75 965.10,283.00 965.35,280.28 965.60,277.58 965.84,274.90 966.09,272.24 966.34,269.60 966.59,266.98 966.83,264.38 967.08,261.80 967.33,259.25 967.58,256.72 967.82,254.21 968.07,251.73 968.32,249.26 968.57,246.82 968.81,244.41 969.06,242.02 969.31,239.65 969.56,237.31 969.80,234.99 970.05,232.70 970.30,230.43 970.55,228.18 970.79,225.97 971.04,223.77 971.29,221.61 971.54,219.47 971.79,217.35 972.03,215.27 972.28,213.21 972.53,211.17 972.78,209.17 973.02,207.19 973.27,205.24 973.52,203.31 973.77,201.42 974.01,199.55 974.26,197.71 974.51,195.90 974.76,194.12 975.00,192.37 975.25,190.65 975.50,188.95 975.75,187.29 975.99,185.66 976.24,184.05 976.49,182.48 976.74,180.93 976.98,179.42 977.23,177.93 977.48,176.48 977.73,175.06 977.98,173.66 978.22,172.30 978.47,170.97 978.72,169.67 978.97,168.41 979.21,167.17 979.46,165.97 979.71,164.80 979.96,163.66 980.20,162.55 980.45,161.47 980.70,160.43 980.95,159.42 981.19,158.44 981.44,157.49 981.69,156.58 981.94,155.70 982.18,154.85 982.43,154.03 982.68,153.25 982.93,152.50 983.17,151.78 983.42,151.10 983.67,150.45 983.92,149.84 984.17,149.25 984.41,148.70 984.66,148.19 984.91,147.70 985.16,147.26 985.40,146.84 985.65,146.46 985.90,146.11 986.15,145.80 986.39,145.52 986.64,145.27 986.89,145.06 987.14,144.88 987.38,144.74 987.63,144.63 987.88,144.55 988.13,144.51 988.37,144.50 988.62,144.53 988.87,144.59 989.12,144.68 989.36,144.81 989.61,144.97 989.86,145.16 990.11,145.39 990.36,145.65 990.60,145.95 990.85,146.28 991.10,146.65 991.35,147.04 991.59,147.48 991.84,147.94 992.09,148.44 992.34,148.97 992.58,149.54 992.83,150.14 993.08,150.77 993.33,151.44 993.57,152.14 993.82,152.87 994.07,153.64 994.32,154.44 994.56,155.27 994.81,156.13 995.06,157.03 995.31,157.96 995.55,158.92 995.80,159.92 996.05,160.95 996.30,162.00 996.55,163.10 996.79,164.22 997.04,165.38 997.29,166.57 997.54,167.79 997.78,169.04 998.03,170.32 998.28,171.63 998.53,172.98 998.77,174.36 999.02,175.76 999.27,177.20 999.52,178.67 999.76,180.17 1000.01,181.70 1000.26,183.26 1000.51,184.85 1000.75,186.47 1001.00,188.12 1001.25,189.80 1001.50,191.51 1001.74,193.24 1001.99,195.01 1002.24,196.81 1002.49,198.63 1002.74,200.48 1002.98,202.36 1003.23,204.27 1003.48,206.21 1003.73,208.17 1003.97,210.17 1004.22,212.19 1004.47,214.23 1004.72,216.31 1004.96,218.41 1005.21,220.53 1005.46,222.69 1005.71,224.87 1005.95,227.07 1006.20,229.30 1006.45,231.56 1006.70,233.84 1006.94,236.15 1007.19,238.48 1007.44,240.83 1007.69,243.21 1007.93,245.61 1008.18,248.04 1008.43,250.49 1008.68,252.97 1008.93,255.46 1009.17,257.98 1009.42,260.52 1009.67,263.09 1009.92,265.68 1010.16,268.28 1010.41,270.91 1010.66,273.56 1010.91,276.24 1011.15,278.93 1011.40,281.64 1011.65,284.37 1011.90,287.13 1012.14,289.90 1012.39,292.69 1012.64,295.50 1012.89,298.33 1013.13,301.18 1013.38,304.04 1013.63,306.92 1013.88,309.83 1014.12,312.74 1014.37,315.68 1014.62,318.63 1014.87,321.60 1015.12,324.58 1015.36,327.58 1015.61,330.60 1015.86,333.63 1016.11,336.67 1016.35,339.73 1016.60,342.81 1016.85,345.90 1017.10,349.00 1017.34,352.11 1017.59,355.24 1017.84,358.38 1018.09,361.53 1018.33,364.70 1018.58,367.88 1018.83,371.06 1019.08,374.26 1019.32,377.47 1019.57,380.69 1019.82,383.92 1020.07,387.16 1020.31,390.41 1020.56,393.67 1020.81,396.94 1021.06,400.22 1021.31,403.50 1021.55,406.79 1021.80,410.09 1022.05,413.40 1022.30,416.71 1022.54,420.03 1022.79,423.36 1023.04,426.69 1023.29,430.02 1023.53,433.37 1023.78,436.71 1024.03,440.06 1024.28,443.42 1024.52,446.78 1024.77,450.14 1025.02,453.51 1025.27,456.87 1025.51,460.25 1025.76,463.62 1026.01,466.99 1026.26,470.37 1026.50,473.74 1026.75,477.12 1027.00,480.50 1027.25,483.88 1027.50,487.26 1027.74,490.63 1027.99,494.01 1028.24,497.38 1028.49,500.75 1028.73,504.13 1028.98,507.49 1029.23,510.86 1029.48,514.22 1029.72,517.58 1029.97,520.94 1030.22,524.29 1030.47,527.63 1030.71,530.98 1030.96,534.31 1031.21,537.64 1031.46,540.97 1031.70,544.29 1031.95,547.60 1032.20,550.91 1032.45,554.21 1032.69,557.50 1032.94,560.78 1033.19,564.06 1033.44,567.33 1033.69,570.59 1033.93,573.84 1034.18,577.08 1034.43,580.31 1034.68,583.53 1034.92,586.74 1035.17,589.94 1035.42,593.12 1035.67,596.30 1035.91,599.47 1036.16,602.62 1036.41,605.76 1036.66,608.89 1036.90,612.00 1037.15,615.10 1037.40,618.19 1037.65,621.27 1037.89,624.33 1038.14,627.37 1038.39,630.40 1038.64,633.42 1038.88,636.42 1039.13,639.40 1039.38,642.37 1039.63,645.32 1039.88,648.26 1040.12,651.17 1040.37,654.08 1040.62,656.96 1040.87,659.82 1041.11,662.67 1041.36,665.50 1041.61,668.31 1041.86,671.10 1042.10,673.87 1042.35,676.63 1042.60,679.36 1042.85,682.07 1043.09,684.76 1043.34,687.44 1043.59,690.09 1043.84,692.72 1044.08,695.32 1044.33,697.91 1044.58,700.48 1044.83,703.02 1045.07,705.54 1045.32,708.03 1045.57,710.51 1045.82,712.96 1046.07,715.39 1046.31,717.79 1046.56,720.17 1046.81,722.52 1047.06,724.85 1047.30,727.16 1047.55,729.44 1047.80,731.70 1048.05,733.93 1048.29,736.13 1048.54,738.31 1048.79,740.47 1049.04,742.59 1049.28,744.69 1049.53,746.77 1049.78,748.81 1050.03,750.83 1050.27,752.83 1050.52,754.79 1050.77,756.73 1051.02,758.64 1051.26,760.52 1051.51,762.37 1051.76,764.19 1052.01,765.99 1052.26,767.76 1052.50,769.49 1052.75,771.20 1053.00,772.88 1053.25,774.53 1053.49,776.15 1053.74,777.74 1053.99,779.30 1054.24,780.83 1054.48,782.33 1054.73,783.80 1054.98,785.24 1055.23,786.64 1055.47,788.02 1055.72,789.37 1055.97,790.68 1056.22,791.96 1056.46,793.21 1056.71,794.43 1056.96,795.62 1057.21,796.78 1057.45,797.90 1057.70,799.00 1057.95,800.05 1058.20,801.08 1058.45,802.08 1058.69,803.04 1058.94,803.97 1059.19,804.87 1059.44,805.73 1059.68,806.56 1059.93,807.36 1060.18,808.13 1060.43,808.86 1060.67,809.56 1060.92,810.23 1061.17,810.86 1061.42,811.46 1061.66,812.03 1061.91,812.56 1062.16,813.06 1062.41,813.52 1062.65,813.96 1062.90,814.35 1063.15,814.72 1063.40,815.05 1063.64,815.35 1063.89,815.61 1064.14,815.84 1064.39,816.03 1064.64,816.19 1064.88,816.32 1065.13,816.41 1065.38,816.47 1065.63,816.50 1065.87,816.49 1066.12,816.45 1066.37,816.37 1066.62,816.26 1066.86,816.12 1067.11,815.94 1067.36,815.73 1067.61,815.48 1067.85,815.20 1068.10,814.89 1068.35,814.54 1068.60,814.16 1068.84,813.74 1069.09,813.30 1069.34,812.81 1069.59,812.30 1069.83,811.75 1070.08,811.16 1070.33,810.55 1070.58,809.90 1070.83,809.22 1071.07,808.50 1071.32,807.75 1071.57,806.97 1071.82,806.15 1072.06,805.30 1072.31,804.42 1072.56,803.51 1072.81,802.56 1073.05,801.58 1073.30,800.57 1073.55,799.53 1073.80,798.45 1074.04,797.34 1074.29,796.20 1074.54,795.03 1074.79,793.83 1075.03,792.59 1075.28,791.33 1075.53,790.03 1075.78,788.70 1076.02,787.34 1076.27,785.94 1076.52,784.52 1076.77,783.07 1077.02,781.58 1077.26,780.07 1077.51,778.52 1077.76,776.95 1078.01,775.34 1078.25,773.71 1078.50,772.05 1078.75,770.35 1079.00,768.63 1079.24,766.88 1079.49,765.10 1079.74,763.29 1079.99,761.45 1080.23,759.58 1080.48,757.69 1080.73,755.76 1080.98,753.81 1081.22,751.83 1081.47,749.83 1081.72,747.79 1081.97,745.73 1082.21,743.65 1082.46,741.53 1082.71,739.39 1082.96,737.23 1083.21,735.03 1083.45,732.82 1083.70,730.57 1083.95,728.30 1084.20,726.01 1084.44,723.69 1084.69,721.35 1084.94,718.98 1085.19,716.59 1085.43,714.18 1085.68,711.74 1085.93,709.27 1086.18,706.79 1086.42,704.28 1086.67,701.75 1086.92,699.20 1087.17,696.62 1087.41,694.02 1087.66,691.40 1087.91,688.76 1088.16,686.10 1088.40,683.42 1088.65,680.72 1088.90,678.00 1089.15,675.25 1089.40,672.49 1089.64,669.71 1089.89,666.91 1090.14,664.09 1090.39,661.25 1090.63,658.39 1090.88,655.52 1091.13,652.63 1091.38,649.72 1091.62,646.79 1091.87,643.85 1092.12,640.89 1092.37,637.91 1092.61,634.92 1092.86,631.91 1093.11,628.89 1093.36,625.85 1093.60,622.80 1093.85,619.73 1094.10,616.65 1094.35,613.55 1094.59,610.45 1094.84,607.32 1095.09,604.19 1095.34,601.04 1095.59,597.88 1095.83,594.71 1096.08,591.53 1096.33,588.34 1096.58,585.13 1096.82,581.92 1097.07,578.69 1097.32,575.46 1097.57,572.21 1097.81,568.96 1098.06,565.69 1098.31,562.42 1098.56,559.14 1098.80,555.85 1099.05,552.56 1099.30,549.26 1099.55,545.95 1099.79,542.63 1100.04,539.31 1100.29,535.98 1100.54,532.64 1100.78,529.31 1101.03,525.96 1101.28,522.61 1101.53,519.26 1101.78,515.90 1102.02,512.54 1102.27,509.18 1102.52,505.81 1102.77,502.44 1103.01,499.07 1103.26,495.70 1103.51,492.32 1103.76,488.94 1104.00,485.57 1104.25,482.19 1104.50,478.81 1104.75,475.43 1104.99,472.06 1105.24,468.68 1105.49,465.30 1105.74,461.93 1105.98,458.56 1106.23,455.19 1106.48,451.82 1106.73,448.46 1106.97,445.10 1107.22,441.74 1107.47,438.39 1107.72,435.04 1107.97,431.69 1108.21,428.36 1108.46,425.02 1108.71,421.69 1108.96,418.37 1109.20,415.05 1109.45,411.74 1109.70,408.44 1109.95,405.15 1110.19,401.86 1110.44,398.58 1110.69,395.31 1110.94,392.04 1111.18,388.79 1111.43,385.54 1111.68,382.31 1111.93,379.08 1112.17,375.87 1112.42,372.66 1112.67,369.47 1112.92,366.29 1113.16,363.12 1113.41,359.96 1113.66,356.81 1113.91,353.68 1114.16,350.55 1114.40,347.45 1114.65,344.35 1114.90,341.27 1115.15,338.20 1115.39,335.15 1115.64,332.11 1115.89,329.09 1116.14,326.08 1116.38,323.09 1116.63,320.11 1116.88,317.15 1117.13,314.21 1117.37,311.28 1117.62,308.37 1117.87,305.48 1118.12,302.61 1118.36,299.75 1118.61,296.91 1118.86,294.09 1119.11,291.29 1119.35,288.51 1119.60,285.75 1119.85,283.00 1120.10,280.28 1120.35,277.58 1120.59,274.90 1120.84,272.24 1121.09,269.60 1121.34,266.98 1121.58,264.38 1121.83,261.80 1122.08,259.25 1122.33,256.72 1122.57,254.21 1122.82,251.73 1123.07,249.26 1123.32,246.82 1123.56,244.41 1123.81,242.02 1124.06,239.65 1124.31,237.31 1124.55,234.99 1124.80,232.70 1125.05,230.43 1125.30,228.18 1125.54,225.97 1125.79,223.77 1126.04,221.61 1126.29,219.47 1126.54,217.35 1126.78,215.27 1127.03,213.21 1127.28,211.17 1127.53,209.17 1127.77,207.19 1128.02,205.24 1128.27,203.31 1128.52,201.42 1128.76,199.55 1129.01,197.71 1129.26,195.90 1129.51,194.12 1129.75,192.37 1130.00,190.65 1130.25,188.95 1130.50,187.29 1130.74,185.66 1130.99,184.05 1131.24,182.48 1131.49,180.93 1131.73,179.42 1131.98,177.93 1132.23,176.48 1132.48,175.06 1132.73,173.66 1132.97,172.30 1133.22,170.97 1133.47,169.67 1133.72,168.41 1133.96,167.17 1134.21,165.97 1134.46,164.80 1134.71,163.66 1134.95,162.55 1135.20,161.47 1135.45,160.43 1135.70,159.42 1135.94,158.44 1136.19,157.49 1136.44,156.58 1136.69,155.70 1136.93,154.85 1137.18,154.03 1137.43,153.25 1137.68,152.50 1137.92,151.78 1138.17,151.10 1138.42,150.45 1138.67,149.84 1138.92,149.25 1139.16,148.70 1139.41,148.19 1139.66,147.70 1139.91,147.26 1140.15,146.84 1140.40,146.46 1140.65,146.11 1140.90,145.80 1141.14,145.52 1141.39,145.27 1141.64,145.06 1141.89,144.88 1142.13,144.74 1142.38,144.63 1142.63,144.55 1142.88,144.51 1143.12,144.50 1143.37,144.53 1143.62,144.59 1143.87,144.68 1144.11,144.81 1144.36,144.97 1144.61,145.16 1144.86,145.39 1145.11,145.65 1145.35,145.95 1145.60,146.28 1145.85,146.65 1146.10,147.04 1146.34,147.48 1146.59,147.94 1146.84,148.44 1147.09,148.97 1147.33,149.54 1147.58,150.14 1147.83,150.77 1148.08,151.44 1148.32,152.14 1148.57,152.87 1148.82,153.64 1149.07,154.44 1149.31,155.27 1149.56,156.13 1149.81,157.03 1150.06,157.96 1150.30,158.92 1150.55,159.92 1150.80,160.95 1151.05,162.00 1151.30,163.10 1151.54,164.22 1151.79,165.38 1152.04,166.57 1152.29,167.79 1152.53,169.04 1152.78,170.32 1153.03,171.63 1153.28,172.98 1153.52,174.36 1153.77,175.76 1154.02,177.20 1154.27,178.67 1154.51,180.17 1154.76,181.70 1155.01,183.26 1155.26,184.85 1155.50,186.47 1155.75,188.12 1156.00,189.80 1156.25,191.51 1156.49,193.24 1156.74,195.01 1156.99,196.81 1157.24,198.63 1157.49,200.48 1157.73,202.36 1157.98,204.27 1158.23,206.21 1158.48,208.17 1158.72,210.17 1158.97,212.19 1159.22,214.23 1159.47,216.31 1159.71,218.41 1159.96,220.53 1160.21,222.69 1160.46,224.87 1160.70,227.07 1160.95,229.30 1161.20,231.56 1161.45,233.84 1161.69,236.15 1161.94,238.48 1162.19,240.83 1162.44,243.21 1162.68,245.61 1162.93,248.04 1163.18,250.49 1163.43,252.97 1163.68,255.46 1163.92,257.98 1164.17,260.52 1164.42,263.09 1164.67,265.68 1164.91,268.28 1165.16,270.91 1165.41,273.56 1165.66,276.24 1165.90,278.93 1166.15,281.64 1166.40,284.37 1166.65,287.13 1166.89,289.90 1167.14,292.69 1167.39,295.50 1167.64,298.33 1167.88,301.18 1168.13,304.04 1168.38,306.92 1168.63,309.83 1168.87,312.74 1169.12,315.68 1169.37,318.63 1169.62,321.60 1169.87,324.58 1170.11,327.58 1170.36,330.60 1170.61,333.63 1170.86,336.67 1171.10,339.73 1171.35,342.81 1171.60,345.90 1171.85,349.00 1172.09,352.11 1172.34,355.24 1172.59,358.38 1172.84,361.53 1173.08,364.70 1173.33,367.88 1173.58,371.06 1173.83,374.26 1174.07,377.47 1174.32,380.69 1174.57,383.92 1174.82,387.16 1175.06,390.41 1175.31,393.67 1175.56,396.94 1175.81,400.22 1176.06,403.50 1176.30,406.79 1176.55,410.09 1176.80,413.40 1177.05,416.71 1177.29,420.03 1177.54,423.36 1177.79,426.69 1178.04,430.02 1178.28,433.37 1178.53,436.71 1178.78,440.06 1179.03,443.42 1179.27,446.78 1179.52,450.14 1179.77,453.51 1180.02,456.87 1180.26,460.25 1180.51,463.62 1180.76,466.99 1181.01,470.37 1181.25,473.74 1181.50,477.12 1181.75,480.50 1182.00,483.88 1182.25,487.26 1182.49,490.63 1182.74,494.01 1182.99,497.38 1183.24,500.75 1183.48,504.13 1183.73,507.49 1183.98,510.86 1184.23,514.22 1184.47,517.58 1184.72,520.94 1184.97,524.29 1185.22,527.63 1185.46,530.98 1185.71,534.31 1185.96,537.64 1186.21,540.97 1186.45,544.29 1186.70,547.60 1186.95,550.91 1187.20,554.21 1187.44,557.50 1187.69,560.78 1187.94,564.06 1188.19,567.33 1188.44,570.59 1188.68,573.84 1188.93,577.08 1189.18,580.31 1189.43,583.53 1189.67,586.74 1189.92,589.94 1190.17,593.12 1190.42,596.30 1190.66,599.47 1190.91,602.62 1191.16,605.76 1191.41,608.89 1191.65,612.00 1191.90,615.10 1192.15,618.19 1192.40,621.27 1192.64,624.33 1192.89,627.37 1193.14,630.40 1193.39,633.42 1193.63,636.42 1193.88,639.40 1194.13,642.37 1194.38,645.32 1194.63,648.26 1194.87,651.17 1195.12,654.08 1195.37,656.96 1195.62,659.82 1195.86,662.67 1196.11,665.50 1196.36,668.31 1196.61,671.10 1196.85,673.87 1197.10,676.63 1197.35,679.36 1197.60,682.07 1197.84,684.76 1198.09,687.44 1198.34,690.09 1198.59,692.72 1198.83,695.32 1199.08,697.91 1199.33,700.48 1199.58,703.02 1199.82,705.54 1200.07,708.03 1200.32,710.51 1200.57,712.96 1200.82,715.39 1201.06,717.79 1201.31,720.17 1201.56,722.52 1201.81,724.85 1202.05,727.16 1202.30,729.44 1202.55,731.70 1202.80,733.93 1203.04,736.13 1203.29,738.31 1203.54,740.47 1203.79,742.59 1204.03,744.69 1204.28,746.77 1204.53,748.81 1204.78,750.83 1205.02,752.83 1205.27,754.79 1205.52,756.73 1205.77,758.64 1206.01,760.52 1206.26,762.37 1206.51,764.19 1206.76,765.99 1207.01,767.76 1207.25,769.49 1207.50,771.20 1207.75,772.88 1208.00,774.53 1208.24,776.15 1208.49,777.74 1208.74,779.30 1208.99,780.83 1209.23,782.33 1209.48,783.80 1209.73,785.24 1209.98,786.64 1210.22,788.02 1210.47,789.37 1210.72,790.68 1210.97,791.96 1211.21,793.21 1211.46,794.43 1211.71,795.62 1211.96,796.78 1212.20,797.90 1212.45,799.00 1212.70,800.05 1212.95,801.08 1213.20,802.08 1213.44,803.04 1213.69,803.97 1213.94,804.87 1214.19,805.73 1214.43,806.56 1214.68,807.36 1214.93,808.13 1215.18,808.86 1215.42,809.56 1215.67,810.23 1215.92,810.86 1216.17,811.46 1216.41,812.03 1216.66,812.56 1216.91,813.06 1217.16,813.52 1217.40,813.96 1217.65,814.35 1217.90,814.72 1218.15,815.05 1218.39,815.35 1218.64,815.61 1218.89,815.84 1219.14,816.03 1219.39,816.19 1219.63,816.32 1219.88,816.41 1220.13,816.47 1220.38,816.50 1220.62,816.49 1220.87,816.45 1221.12,816.37 1221.37,816.26 1221.61,816.12 1221.86,815.94 1222.11,815.73 1222.36,815.48 1222.60,815.20 1222.85,814.89 1223.10,814.54 1223.35,814.16 1223.59,813.74 1223.84,813.30 1224.09,812.81 1224.34,812.30 1224.58,811.75 1224.83,811.16 1225.08,810.55 1225.33,809.90 1225.58,809.22 1225.82,808.50 1226.07,807.75 1226.32,806.97 1226.57,806.15 1226.81,805.30 1227.06,804.42 1227.31,803.51 1227.56,802.56 1227.80,801.58 1228.05,800.57 1228.30,799.53 1228.55,798.45 1228.79,797.34 1229.04,796.20 1229.29,795.03 1229.54,793.83 1229.78,792.59 1230.03,791.33 1230.28,790.03 1230.53,788.70 1230.77,787.34 1231.02,785.94 1231.27,784.52 1231.52,783.07 1231.77,781.58 1232.01,780.07 1232.26,778.52 1232.51,776.95 1232.76,775.34 1233.00,773.71 1233.25,772.05 1233.50,770.35 1233.75,768.63 1233.99,766.88 1234.24,765.10 1234.49,763.29 1234.74,761.45 1234.98,759.58 1235.23,757.69 1235.48,755.76 1235.73,753.81 1235.97,751.83 1236.22,749.83 1236.47,747.79 1236.72,745.73 1236.96,743.65 1237.21,741.53 1237.46,739.39 1237.71,737.23 1237.96,735.03 1238.20,732.82 1238.45,730.57 1238.70,728.30 1238.95,726.01 1239.19,723.69 1239.44,721.35 1239.69,718.98 1239.94,716.59 1240.18,714.18 1240.43,711.74 1240.68,709.27 1240.93,706.79 1241.17,704.28 1241.42,701.75 1241.67,699.20 1241.92,696.62 1242.16,694.02 1242.41,691.40 1242.66,688.76 1242.91,686.10 1243.15,683.42 1243.40,680.72 1243.65,678.00 1243.90,675.25 1244.15,672.49 1244.39,669.71 1244.64,666.91 1244.89,664.09 1245.14,661.25 1245.38,658.39 1245.63,655.52 1245.88,652.63 1246.13,649.72 1246.37,646.79 1246.62,643.85 1246.87,640.89 1247.12,637.91 1247.36,634.92 1247.61,631.91 1247.86,628.89 1248.11,625.85 1248.35,622.80 1248.60,619.73 1248.85,616.65 1249.10,613.55 1249.34,610.45 1249.59,607.32 1249.84,604.19 1250.09,601.04 1250.34,597.88 1250.58,594.71 1250.83,591.53 1251.08,588.34 1251.33,585.13 1251.57,581.92 1251.82,578.69 1252.07,575.46 1252.32,572.21 1252.56,568.96 1252.81,565.69 1253.06,562.42 1253.31,559.14 1253.55,555.85 1253.80,552.56 1254.05,549.26 1254.30,545.95 1254.54,542.63 1254.79,539.31 1255.04,535.98 1255.29,532.64 1255.53,529.31 1255.78,525.96 1256.03,522.61 1256.28,519.26 1256.53,515.90 1256.77,512.54 1257.02,509.18 1257.27,505.81 1257.52,502.44 1257.76,499.07 1258.01,495.70 1258.26,492.32 1258.51,488.94 1258.75,485.57 1259.00,482.19 1259.25,478.81 1259.50,475.43 1259.74,472.06 1259.99,468.68 1260.24,465.30 1260.49,461.93 1260.73,458.56 1260.98,455.19 1261.23,451.82 1261.48,448.46 1261.72,445.10 1261.97,441.74 1262.22,438.39 1262.47,435.04 1262.72,431.69 1262.96,428.36 1263.21,425.02 1263.46,421.69 1263.71,418.37 1263.95,415.05 1264.20,411.74 1264.45,408.44 1264.70,405.15 1264.94,401.86 1265.19,398.58 1265.44,395.31 1265.69,392.04 1265.93,388.79 1266.18,385.54 1266.43,382.31 1266.68,379.08 1266.92,375.87 1267.17,372.66 1267.42,369.47 1267.67,366.29 1267.91,363.12 1268.16,359.96 1268.41,356.81 1268.66,353.68 1268.91,350.55 1269.15,347.45 1269.40,344.35 1269.65,341.27 1269.90,338.20 1270.14,335.15 1270.39,332.11 1270.64,329.09 1270.89,326.08 1271.13,323.09 1271.38,320.11 1271.63,317.15 1271.88,314.21 1272.12,311.28 1272.37,308.37 1272.62,305.48 1272.87,302.61 1273.11,299.75 1273.36,296.91 1273.61,294.09 1273.86,291.29 1274.10,288.51 1274.35,285.75 1274.60,283.00 1274.85,280.28 1275.10,277.58 1275.34,274.90 1275.59,272.24 1275.84,269.60 1276.09,266.98 1276.33,264.38 1276.58,261.80 1276.83,259.25 1277.08,256.72 1277.32,254.21 1277.57,251.73 1277.82,249.26 1278.07,246.82 1278.31,244.41 1278.56,242.02 1278.81,239.65 1279.06,237.31 1279.30,234.99 1279.55,232.70 1279.80,230.43 1280.05,228.18 1280.29,225.97 1280.54,223.77 1280.79,221.61 1281.04,219.47 1281.29,217.35 1281.53,215.27 1281.78,213.21 1282.03,211.17 1282.28,209.17 1282.52,207.19 1282.77,205.24 1283.02,203.31 1283.27,201.42 1283.51,199.55 1283.76,197.71 1284.01,195.90 1284.26,194.12 1284.50,192.37 1284.75,190.65 1285.00,188.95 1285.25,187.29 1285.49,185.66 1285.74,184.05 1285.99,182.48 1286.24,180.93 1286.48,179.42 1286.73,177.93 1286.98,176.48 1287.23,175.06 1287.48,173.66 1287.72,172.30 1287.97,170.97 1288.22,169.67 1288.47,168.41 1288.71,167.17 1288.96,165.97 1289.21,164.80 1289.46,163.66 1289.70,162.55 1289.95,161.47 1290.20,160.43 1290.45,159.42 1290.69,158.44 1290.94,157.49 1291.19,156.58 1291.44,155.70 1291.68,154.85 1291.93,154.03 1292.18,153.25 1292.43,152.50 1292.67,151.78 1292.92,151.10 1293.17,150.45 1293.42,149.84 1293.67,149.25 1293.91,148.70 1294.16,148.19 1294.41,147.70 1294.66,147.26 1294.90,146.84 1295.15,146.46 1295.40,146.11 1295.65,145.80 1295.89,145.52 1296.14,145.27 1296.39,145.06 1296.64,144.88 1296.88,144.74 1297.13,144.63 1297.38,144.55 1297.63,144.51 1297.87,144.50 1298.12,144.53 1298.37,144.59 1298.62,144.68 1298.86,144.81 1299.11,144.97 1299.36,145.16 1299.61,145.39 1299.86,145.65 1300.10,145.95 1300.35,146.28 1300.60,146.65 1300.85,147.04 1301.09,147.48 1301.34,147.94 1301.59,148.44 1301.84,148.97 1302.08,149.54 1302.33,150.14 1302.58,150.77 1302.83,151.44 1303.07,152.14 1303.32,152.87 1303.57,153.64 1303.82,154.44 1304.06,155.27 1304.31,156.13 1304.56,157.03 1304.81,157.96 1305.05,158.92 1305.30,159.92 1305.55,160.95 1305.80,162.00 1306.05,163.10 1306.29,164.22 1306.54,165.38 1306.79,166.57 1307.04,167.79 1307.28,169.04 1307.53,170.32 1307.78,171.63 1308.03,172.98 1308.27,174.36 1308.52,175.76 1308.77,177.20 1309.02,178.67 1309.26,180.17 1309.51,181.70 1309.76,183.26 1310.01,184.85 1310.25,186.47 1310.50,188.12 1310.75,189.80 1311.00,191.51 1311.24,193.24 1311.49,195.01 1311.74,196.81 1311.99,198.63 1312.24,200.48 1312.48,202.36 1312.73,204.27 1312.98,206.21 1313.23,208.17 1313.47,210.17 1313.72,212.19 1313.97,214.23 1314.22,216.31 1314.46,218.41 1314.71,220.53 1314.96,222.69 1315.21,224.87 1315.45,227.07 1315.70,229.30 1315.95,231.56 1316.20,233.84 1316.44,236.15 1316.69,238.48 1316.94,240.83 1317.19,243.21 1317.43,245.61 1317.68,248.04 1317.93,250.49 1318.18,252.97 1318.43,255.46 1318.67,257.98 1318.92,260.52 1319.17,263.09 1319.42,265.68 1319.66,268.28 1319.91,270.91 1320.16,273.56 1320.41,276.24 1320.65,278.93 1320.90,281.64 1321.15,284.37 1321.40,287.13 1321.64,289.90 1321.89,292.69 1322.14,295.50 1322.39,298.33 1322.63,301.18 1322.88,304.04 1323.13,306.92 1323.38,309.83 1323.62,312.74 1323.87,315.68 1324.12,318.63 1324.37,321.60 1324.62,324.58 1324.86,327.58 1325.11,330.60 1325.36,333.63 1325.61,336.67 1325.85,339.73 1326.10,342.81 1326.35,345.90 1326.60,349.00 1326.84,352.11 1327.09,355.24 1327.34,358.38 1327.59,361.53 1327.83,364.70 1328.08,367.88 1328.33,371.06 1328.58,374.26 1328.82,377.47 1329.07,380.69 1329.32,383.92 1329.57,387.16 1329.81,390.41 1330.06,393.67 1330.31,396.94 1330.56,400.22 1330.81,403.50 1331.05,406.79 1331.30,410.09 1331.55,413.40 1331.80,416.71 1332.04,420.03 1332.29,423.36 1332.54,426.69 1332.79,430.02 1333.03,433.37 1333.28,436.71 1333.53,440.06 1333.78,443.42 1334.02,446.78 1334.27,450.14 1334.52,453.51 1334.77,456.87 1335.01,460.25 1335.26,463.62 1335.51,466.99 1335.76,470.37 1336.00,473.74 1336.25,477.12 1336.50,480.50" stroke="#00FF00" fill="none"/><polyline points="717.50,480.50 717.75,483.88 718.00,487.26 718.24,490.63 718.49,494.01 718.74,497.38 718.99,500.75 719.23,504.13 719.48,507.49 719.73,510.86 719.98,514.22 720.22,517.58 720.47,520.94 720.72,524.29 720.97,527.63 721.21,530.98 721.46,534.31 721.71,537.64 721.96,540.97 722.20,544.29 722.45,547.60 722.70,550.91 722.95,554.21 723.19,557.50 723.44,560.78 723.69,564.06 723.94,567.33 724.19,570.59 724.43,573.84 724.68,577.08 724.93,580.31 725.18,583.53 725.42,586.74 725.67,589.94 725.92,593.12 726.17,596.30 726.41,599.47 726.66,602.62 726.91,605.76 727.16,608.89 727.40,612.00 727.65,615.10 727.90,618.19 728.15,621.27 728.39,624.33 728.64,627.37 728.89,630.40 729.14,633.42 729.38,636.42 729.63,639.40 729.88,642.37 730.13,645.32 730.38,648.26 730.62,651.17 730.87,654.08 731.12,656.96 731.37,659.82 731.61,662.67 731.86,665.50 732.11,668.31 732.36,671.10 732.60,673.87 732.85,676.63 733.10,679.36 733.35,682.07 733.59,684.76 733.84,687.44 734.09,690.09 734.34,692.72 734.58,695.32 734.83,697.91 735.08,700.48 735.33,703.02 735.57,705.54 735.82,708.03 736.07,710.51 736.32,712.96 736.57,715.39 736.81,717.79 737.06,720.17 737.31,722.52 737.56,724.85 737.80,727.16 738.05,729.44 738.30,731.70 738.55,733.93 738.79,736.13 739.04,738.31 739.29,740.47 739.54,742.59 739.78,744.69 740.03,746.77 740.28,748.81 740.53,750.83 740.77,752.83 741.02,754.79 741.27,756.73 741.52,758.64 741.76,760.52 742.01,762.37 742.26,764.19 742.51,765.99 742.76,767.76 743.00,769.49 743.25,771.20 743.50,772.88 743.75,774.53 743.99,776.15 744.24,777.74 744.49,779.30 744.74,780.83 744.98,782.33 745.23,783.80 745.48,785.24 745.73,786.64 745.97,788.02 746.22,789.37 746.47,790.68 746.72,791.96 746.96,793.21 747.21,794.43 747.46,795.62 747.71,796.78 747.95,797.90 748.20,799.00 748.45,800.05 748.70,801.08 748.95,802.08 749.19,803.04 749.44,803.97 749.69,804.87 749.94,805.73 750.18,806.56 750.43,807.36 750.68,808.13 750.93,808.86 751.17,809.56 751.42,810.23 751.67,810.86 751.92,811.46 752.16,812.03 752.41,812.56 752.66,813.06 752.91,813.52 753.15,813.96 753.40,814.35 753.65,814.72 753.90,815.05 754.14,815.35 754.39,815.61 754.64,815.84 754.89,816.03 755.14,816.19 755.38,816.32 755.63,816.41 755.88,816.47 756.13,816.50 756.37,816.49 756.62,816.45 756.87,816.37 757.12,816.26 757.36,816.12 757.61,815.94 757.86,815.73 758.11,815.48 758.35,815.20 758.60,814.89 758.85,814.54 759.10,814.16 759.34,813.74 759.59,813.30 759.84,812.81 760.09,812.30 760.33,811.75 760.58,811.16 760.83,810.55 761.08,809.90 761.33,809.22 761.57,808.50 761.82,807.75 762.07,806.97 762.32,806.15 762.56,805.30 762.81,804.42 763.06,803.51 763.31,802.56 763.55,801.58 763.80,800.57 764.05,799.53 764.30,798.45 764.54,797.34 764.79,796.20 765.04,795.03 765.29,793.83 765.53,792.59 765.78,791.33 766.03,790.03 766.28,788.70 766.52,787.34 766.77,785.94 767.02,784.52 767.27,783.07 767.52,781.58 767.76,780.07 768.01,778.52 768.26,776.95 768.51,775.34 768.75,773.71 769.00,772.05 769.25,770.35 769.50,768.63 769.74,766.88 769.99,765.10 770.24,763.29 770.49,761.45 770.73,759.58 770.98,757.69 771.23,755.76 771.48,753.81 771.72,751.83 771.97,749.83 772.22,747.79 772.47,745.73 772.71,743.65 772.96,741.53 773.21,739.39 773.46,737.23 773.71,735.03 773.95,732.82 774.20,730.57 774.45,728.30 774.70,726.01 774.94,723.69 775.19,721.35 775.44,718.98 775.69,716.59 775.93,714.18 776.18,711.74 776.43,709.27 776.68,706.79 776.92,704.28 777.17,701.75 777.42,699.20 777.67,696.62 777.91,694.02 778.16,691.40 778.41,688.76 778.66,686.10 778.90,683.42 779.15,680.72 779.40,678.00 779.40,678.00 841.30,678.00 841.30,681.00 841.30,160.95 841.55,162.00 841.80,163.10 842.04,164.22 842.29,165.38 842.54,166.57 842.79,167.79 843.03,169.04 843.28,170.32 843.53,171.63 843.78,172.98 844.02,174.36 844.27,175.76 844.52,177.20 844.77,178.67 845.01,180.17 845.26,181.70 845.51,183.26 845.76,184.85 846.00,186.47 846.25,188.12 846.50,189.80 846.75,191.51 846.99,193.24 847.24,195.01 847.49,196.81 847.74,198.63 847.99,200.48 848.23,202.36 848.48,204.27 848.73,206.21 848.98,208.17 849.22,210.17 849.47,212.19 849.72,214.23 849.97,216.31 850.21,218.41 850.46,220.53 850.71,222.69 850.96,224.87 851.20,227.07 851.45,229.30 851.70,231.56 851.95,233.84 852.19,236.15 852.44,238.48 852.69,240.83 852.94,243.21 853.18,245.61 853.43,248.04 853.68,250.49 853.93,252.97 854.18,255.46 854.42,257.98 854.67,260.52 854.92,263.09 855.17,265.68 855.41,268.28 855.66,270.91 855.91,273.56 856.16,276.24 856.40,278.93 856.65,281.64 856.90,284.37 857.15,287.13 857.39,289.90 857.64,292.69 857.89,295.50 858.14,298.33 858.38,301.18 858.63,304.04 858.88,306.92 859.13,309.83 859.37,312.74 859.62,315.68 859.87,318.63 860.12,321.60 860.37,324.58 860.61,327.58 860.86,330.60 861.11,333.63 861.36,336.67 861.60,339.73 861.85,342.81 862.10,345.90 862.35,349.00 862.59,352.11 862.84,355.24 863.09,358.38 863.34,361.53 863.58,364.70 863.83,367.88 864.08,371.06 864.33,374.26 864.57,377.47 864.82,380.69 865.07,383.92 865.32,387.16 865.56,390.41 865.81,393.67 866.06,396.94 866.31,400.22 866.56,403.50 866.80,406.79 867.05,410.09 867.30,413.40 867.55,416.71 867.79,420.03 868.04,423.36 868.29,426.69 868.54,430.02 868.78,433.37 869.03,436.71 869.28,440.06 869.53,443.42 869.77,446.78 870.02,450.14 870.27,453.51 870.52,456.87 870.76,460.25 871.01,463.62 871.26,466.99 871.51,470.37 871.75,473.74 872.00,477.12 872.25,480.50 872.50,483.88 872.75,487.26 872.99,490.63 873.24,494.01 873.49,497.38 873.74,500.75 873.98,504.13 874.23,507.49 874.48,510.86 874.73,514.22 874.97,517.58 875.22,520.94 875.47,524.29 875.72,527.63 875.96,530.98 876.21,534.31 876.46,537.64 876.71,540.97 876.95,544.29 877.20,547.60 877.45,550.91 877.70,554.21 877.94,557.50 878.19,560.78 878.44,564.06 878.69,567.33 878.94,570.59 879.18,573.84 879.43,577.08 879.68,580.31 879.93,583.53 880.17,586.74 880.42,589.94 880.67,593.12 880.92,596.30 881.16,599.47 881.41,602.62 881.66,605.76 881.91,608.89 882.15,612.00 882.40,615.10 882.65,618.19 882.90,621.27 883.14,624.33 883.39,627.37 883.64,630.40 883.89,633.42 884.13,636.42 884.38,639.40 884.63,642.37 884.88,645.32 885.13,648.26 885.37,651.17 885.62,654.08 885.87,656.96 886.12,659.82 886.36,662.67 886.61,665.50 886.86,668.31 887.11,671.10 887.35,673.87 887.60,676.63 887.85,679.36 888.10,682.07 888.34,684.76 888.59,687.44 888.84,690.09 889.09,692.72 889.33,695.32 889.58,697.91 889.83,700.48 890.08,703.02 890.32,705.54 890.57,708.03 890.82,710.51 891.07,712.96 891.32,715.39 891.56,717.79 891.81,720.17 892.06,722.52 892.31,724.85 892.55,727.16 892.80,729.44 893.05,731.70 893.30,733.93 893.54,736.13 893.79,738.31 894.04,740.47 894.29,742.59 894.53,744.69 894.78,746.77 895.03,748.81 895.28,750.83 895.52,752.83 895.77,754.79 896.02,756.73 896.27,758.64 896.51,760.52 896.76,762.37 897.01,764.19 897.26,765.99 897.51,767.76 897.75,769.49 898.00,771.20 898.25,772.88 898.50,774.53 898.74,776.15 898.99,777.74 899.24,779.30 899.49,780.83 899.73,782.33 899.98,783.80 900.23,785.24 900.48,786.64 900.72,788.02 900.97,789.37 901.22,790.68 901.47,791.96 901.71,793.21 901.96,794.43 902.21,795.62 902.46,796.78 902.70,797.90 902.95,799.00 903.20,800.05 903.20,800.05 965.10,800.05 965.10,802.05 965.10,283.00 965.35,280.28 965.60,277.58 965.84,274.90 966.09,272.24 966.34,269.60 966.59,266.98 966.83,264.38 967.08,261.80 967.33,259.25 967.58,256.72 967.82,254.21 968.07,251.73 968.32,249.26 968.57,246.82 968.81,244.41 969.06,242.02 969.31,239.65 969.56,237.31 969.80,234.99 970.05,232.70 970.30,230.43 970.55,228.18 970.79,225.97 971.04,223.77 971.29,221.61 971.54,219.47 971.79,217.35 972.03,215.27 972.28,213.21 972.53,211.17 972.78,209.17 973.02,207.19 973.27,205.24 973.52,203.31 973.77,201.42 974.01,199.55 974.26,197.71 974.51,195.90 974.76,194.12 975.00,192.37 975.25,190.65 975.50,188.95 975.75,187.29 975.99,185.66 976.24,184.05 976.49,182.48 976.74,180.93 976.98,179.42 977.23,177.93 977.48,176.48 977.73,175.06 977.98,173.66 978.22,172.30 978.47,170.97 978.72,169.67 978.97,168.41 979.21,167.17 979.46,165.97 979.71,164.80 979.96,163.66 980.20,162.55 980.45,161.47 980.70,160.43 980.95,159.42 981.19,158.44 981.44,157.49 981.69,156.58 981.94,155.70 982.18,154.85 982.43,154.03 982.68,153.25 982.93,152.50 983.17,151.78 983.42,151.10 983.67,150.45 983.92,149.84 984.17,149.25 984.41,148.70 984.66,148.19 984.91,147.70 985.16,147.26 985.40,146.84 985.65,146.46 985.90,146.11 986.15,145.80 986.39,145.52 986.64,145.27 986.89,145.06 987.14,144.88 987.38,144.74 987.63,144.63 987.88,144.55 988.13,144.51 988.37,144.50 988.62,144.53 988.87,144.59 989.12,144.68 989.36,144.81 989.61,144.97 989.86,145.16 990.11,145.39 990.36,145.65 990.60,145.95 990.85,146.28 991.10,146.65 991.35,147.04 991.59,147.48 991.84,147.94 992.09,148.44 992.34,148.97 992.58,149.54 992.83,150.14 993.08,150.77 993.33,151.44 993.57,152.14 993.82,152.87 994.07,153.64 994.32,154.44 994.56,155.27 994.81,156.13 995.06,157.03 995.31,157.96 995.55,158.92 995.80,159.92 996.05,160.95 996.30,162.00 996.55,163.10 996.79,164.22 997.04,165.38 997.29,166.57 997.54,167.79 997.78,169.04 998.03,170.32 998.28,171.63 998.53,172.98 998.77,174.36 999.02,175.76 999.27,177.20 999.52,178.67 999.76,180.17 1000.01,181.70 1000.26,183.26 1000.51,184.85 1000.75,186.47 1001.00,188.12 1001.25,189.80 1001.50,191.51 1001.74,193.24 1001.99,195.01 1002.24,196.81 1002.49,198.63 1002.74,200.48 1002.98,202.36 1003.23,204.27 1003.48,206.21 1003.73,208.17 1003.97,210.17 1004.22,212.19 1004.47,214.23 1004.72,216.31 1004.96,218.41 1005.21,220.53 1005.46,222.69 1005.71,224.87 1005.95,227.07 1006.20,229.30 1006.45,231.56 1006.70,233.84 1006.94,236.15 1007.19,238.48 1007.44,240.83 1007.69,243.21 1007.93,245.61 1008.18,248.04 1008.43,250.49 1008.68,252.97 1008.93,255.46 1009.17,257.98 1009.42,260.52 1009.67,263.09 1009.92,265.68 1010.16,268.28 1010.41,270.91 1010.66,273.56 1010.91,276.24 1011.15,278.93 1011.40,281.64 1011.65,284.37 1011.90,287.13 1012.14,289.90 1012.39,292.69 1012.64,295.50 1012.89,298.33 1013.13,301.18 1013.38,304.04 1013.63,306.92 1013.88,309.83 1014.12,312.74 1014.37,315.68 1014.62,318.63 1014.87,321.60 1015.12,324.58 1015.36,327.58 1015.61,330.60 1015.86,333.63 1016.11,336.67 1016.35,339.73 1016.60,342.81 1016.85,345.90 1017.10,349.00 1017.34,352.11 1017.59,355.24 1017.84,358.38 1018.09,361.53 1018.33,364.70 1018.58,367.88 1018.83,371.06 1019.08,374.26 1019.32,377.47 1019.57,380.69 1019.82,383.92 1020.07,387.16 1020.31,390.41 1020.56,393.67 1020.81,396.94 1021.06,400.22 1021.31,403.50 1021.55,406.79 1021.80,410.09 1022.05,413.40 1022.30,416.71 1022.54,420.03 1022.79,423.36 1023.04,426.69 1023.29,430.02 1023.53,433.37 1023.78,436.71 1024.03,440.06 1024.28,443.42 1024.52,446.78 1024.77,450.14 1025.02,453.51 1025.27,456.87 1025.51,460.25 1025.76,463.62 1026.01,466.99 1026.26,470.37 1026.50,473.74 1026.75,477.12 1027.00,480.50 1027.00,481.50 1088.90,481.50 1088.90,480.50 1088.90,678.00 1089.15,675.25 1089.40,672.49 1089.64,669.71 1089.89,666.91 1090.14,664.09 1090.39,661.25 1090.63,658.39 1090.88,655.52 1091.13,652.63 1091.38,649.72 1091.62,646.79 1091.87,643.85 1092.12,640.89 1092.37,637.91 1092.61,634.92 1092.86,631.91 1093.11,628.89 1093.36,625.85 1093.60,622.80 1093.85,619.73 1094.10,616.65 1094.35,613.55 1094.59,610.45 1094.84,607.32 1095.09,604.19 1095.34,601.04 1095.59,597.88 1095.83,594.71 1096.08,591.53 1096.33,588.34 1096.58,585.13 1096.82,581.92 1097.07,578.69 1097.32,575.46 1097.57,572.21 1097.81,568.96 1098.06,565.69 1098.31,562.42 1098.56,559.14 1098.80,555.85 1099.05,552.56 1099.30,549.26 1099.55,545.95 1099.79,542.63 1100.04,539.31 1100.29,535.98 1100.54,532.64 1100.78,529.31 1101.03,525.96 1101.28,522.61 1101.53,519.26 1101.78,515.90 1102.02,512.54 1102.27,509.18 1102.52,505.81 1102.77,502.44 1103.01,499.07 1103.26,495.70 1103.51,492.32 1103.76,488.94 1104.00,485.57 1104.25,482.19 1104.50,478.81 1104.75,475.43 1104.99,472.06 1105.24,468.68 1105.49,465.30 1105.74,461.93 1105.98,458.56 1106.23,455.19 1106.48,451.82 1106.73,448.46 1106.97,445.10 1107.22,441.74 1107.47,438.39 1107.72,435.04 1107.97,431.69 1108.21,428.36 1108.46,425.02 1108.71,421.69 1108.96,418.37 1109.20,415.05 1109.45,411.74 1109.70,408.44 1109.95,405.15 1110.19,401.86 1110.44,398.58 1110.69,395.31 1110.94,392.04 1111.18,388.79 1111.43,385.54 1111.68,382.31 1111.93,379.08 1112.17,375.87 1112.42,372.66 1112.67,369.47 1112.92,366.29 1113.16,363.12 1113.41,359.96 1113.66,356.81 1113.91,353.68 1114.16,350.55 1114.40,347.45 1114.65,344.35 1114.90,341.27 1115.15,338.20 1115.39,335.15 1115.64,332.11 1115.89,329.09 1116.14,326.08 1116.38,323.09 1116.63,320.11 1116.88,317.15 1117.13,314.21 1117.37,311.28 1117.62,308.37 1117.87,305.48 1118.12,302.61 1118.36,299.75 1118.61,296.91 1118.86,294.09 1119.11,291.29 1119.35,288.51 1119.60,285.75 1119.85,283.00 1120.10,280.28 1120.35,277.58 1120.59,274.90 1120.84,272.24 1121.09,269.60 1121.34,266.98 1121.58,264.38 1121.83,261.80 1122.08,259.25 1122.33,256.72 1122.57,254.21 1122.82,251.73 1123.07,249.26 1123.32,246.82 1123.56,244.41 1123.81,242.02 1124.06,239.65 1124.31,237.31 1124.55,234.99 1124.80,232.70 1125.05,230.43 1125.30,228.18 1125.54,225.97 1125.79,223.77 1126.04,221.61 1126.29,219.47 1126.54,217.35 1126.78,215.27 1127.03,213.21 1127.28,211.17 1127.53,209.17 1127.77,207.19 1128.02,205.24 1128.27,203.31 1128.52,201.42 1128.76,199.55 1129.01,197.71 1129.26,195.90 1129.51,194.12 1129.75,192.37 1130.00,190.65 1130.25,188.95 1130.50,187.29 1130.74,185.66 1130.99,184.05 1131.24,182.48 1131.49,180.93 1131.73,179.42 1131.98,177.93 1132.23,176.48 1132.48,175.06 1132.73,173.66 1132.97,172.30 1133.22,170.97 1133.47,169.67 1133.72,168.41 1133.96,167.17 1134.21,165.97 1134.46,164.80 1134.71,163.66 1134.95,162.55 1135.20,161.47 1135.45,160.43 1135.70,159.42 1135.94,158.44 1136.19,157.49 1136.44,156.58 1136.69,155.70 1136.93,154.85 1137.18,154.03 1137.43,153.25 1137.68,152.50 1137.92,151.78 1138.17,151.10 1138.42,150.45 1138.67,149.84 1138.92,149.25 1139.16,148.70 1139.41,148.19 1139.66,147.70 1139.91,147.26 1140.15,146.84 1140.40,146.46 1140.65,146.11 1140.90,145.80 1141.14,145.52 1141.39,145.27 1141.64,145.06 1141.89,144.88 1142.13,144.74 1142.38,144.63 1142.63,144.55 1142.88,144.51 1143.12,144.50 1143.37,144.53 1143.62,144.59 1143.87,144.68 1144.11,144.81 1144.36,144.97 1144.61,145.16 1144.86,145.39 1145.11,145.65 1145.35,145.95 1145.60,146.28 1145.85,146.65 1146.10,147.04 1146.34,147.48 1146.59,147.94 1146.84,148.44 1147.09,148.97 1147.33,149.54 1147.58,150.14 1147.83,150.77 1148.08,151.44 1148.32,152.14 1148.57,152.87 1148.82,153.64 1149.07,154.44 1149.31,155.27 1149.56,156.13 1149.81,157.03 1150.06,157.96 1150.30,158.92 1150.55,159.92 1150.80,160.95 1150.80,160.95 1212.70,160.95 1212.70,159.95 1212.70,800.05 1212.95,801.08 1213.20,802.08 1213.44,803.04 1213.69,803.97 1213.94,804.87 1214.19,805.73 1214.43,806.56 1214.68,807.36 1214.93,808.13 1215.18,808.86 1215.42,809.56 1215.67,810.23 1215.92,810.86 1216.17,811.46 1216.41,812.03 1216.66,812.56 1216.91,813.06 1217.16,813.52 1217.40,813.96 1217.65,814.35 1217.90,814.72 1218.15,815.05 1218.39,815.35 1218.64,815.61 1218.89,815.84 1219.14,816.03 1219.39,816.19 1219.63,816.32 1219.88,816.41 1220.13,816.47 1220.38,816.50 1220.62,816.49 1220.87,816.45 1221.12,816.37 1221.37,816.26 1221.61,816.12 1221.86,815.94 1222.11,815.73 1222.36,815.48 1222.60,815.20 1222.85,814.89 1223.10,814.54 1223.35,814.16 1223.59,813.74 1223.84,813.30 1224.09,812.81 1224.34,812.30 1224.58,811.75 1224.83,811.16 1225.08,810.55 1225.33,809.90 1225.58,809.22 1225.82,808.50 1226.07,807.75 1226.32,806.97 1226.57,806.15 1226.81,805.30 1227.06,804.42 1227.31,803.51 1227.56,802.56 1227.80,801.58 1228.05,800.57 1228.30,799.53 1228.55,798.45 1228.79,797.34 1229.04,796.20 1229.29,795.03 1229.54,793.83 1229.78,792.59 1230.03,791.33 1230.28,790.03 1230.53,788.70 1230.77,787.34 1231.02,785.94 1231.27,784.52 1231.52,783.07 1231.77,781.58 1232.01,780.07 1232.26,778.52 1232.51,776.95 1232.76,775.34 1233.00,773.71 1233.25,772.05 1233.50,770.35 1233.75,768.63 1233.99,766.88 1234.24,765.10 1234.49,763.29 1234.74,761.45 1234.98,759.58 1235.23,757.69 1235.48,755.76 1235.73,753.81 1235.97,751.83 1236.22,749.83 1236.47,747.79 1236.72,745.73 1236.96,743.65 1237.21,741.53 1237.46,739.39 1237.71,737.23 1237.96,735.03 1238.20,732.82 1238.45,730.57 1238.70,728.30 1238.95,726.01 1239.19,723.69 1239.44,721.35 1239.69,718.98 1239.94,716.59 1240.18,714.18 1240.43,711.74 1240.68,709.27 1240.93,706.79 1241.17,704.28 1241.42,701.75 1241.67,699.20 1241.92,696.62 1242.16,694.02 1242.41,691.40 1242.66,688.76 1242.91,686.10 1243.15,683.42 1243.40,680.72 1243.65,678.00 1243.90,675.25 1244.15,672.49 1244.39,669.71 1244.64,666.91 1244.89,664.09 1245.14,661.25 1245.38,658.39 1245.63,655.52 1245.88,652.63 1246.13,649.72 1246.37,646.79 1246.62,643.85 1246.87,640.89 1247.12,637.91 1247.36,634.92 1247.61,631.91 1247.86,628.89 1248.11,625.85 1248.35,622.80 1248.60,619.73 1248.85,616.65 1249.10,613.55 1249.34,610.45 1249.59,607.32 1249.84,604.19 1250.09,601.04 1250.34,597.88 1250.58,594.71 1250.83,591.53 1251.08,588.34 1251.33,585.13 1251.57,581.92 1251.82,578.69 1252.07,575.46 1252.32,572.21 1252.56,568.96 1252.81,565.69 1253.06,562.42 1253.31,559.14 1253.55,555.85 1253.80,552.56 1254.05,549.26 1254.30,545.95 1254.54,542.63 1254.79,539.31 1255.04,535.98 1255.29,532.64 1255.53,529.31 1255.78,525.96 1256.03,522.61 1256.28,519.26 1256.53,515.90 1256.77,512.54 1257.02,509.18 1257.27,505.81 1257.52,502.44 1257.76,499.07 1258.01,495.70 1258.26,492.32 1258.51,488.94 1258.75,485.57 1259.00,482.19 1259.25,478.81 1259.50,475.43 1259.74,472.06 1259.99,468.68 1260.24,465.30 1260.49,461.93 1260.73,458.56 1260.98,455.19 1261.23,451.82 1261.48,448.46 1261.72,445.10 1261.97,441.74 1262.22,438.39 1262.47,435.04 1262.72,431.69 1262.96,428.36 1263.21,425.02 1263.46,421.69 1263.71,418.37 1263.95,415.05 1264.20,411.74 1264.45,408.44 1264.70,405.15 1264.94,401.86 1265.19,398.58 1265.44,395.31 1265.69,392.04 1265.93,388.79 1266.18,385.54 1266.43,382.31 1266.68,379.08 1266.92,375.87 1267.17,372.66 1267.42,369.47 1267.67,366.29 1267.91,363.12 1268.16,359.96 1268.41,356.81 1268.66,353.68 1268.91,350.55 1269.15,347.45 1269.40,344.35 1269.65,341.27 1269.90,338.20 1270.14,335.15 1270.39,332.11 1270.64,329.09 1270.89,326.08 1271.13,323.09 1271.38,320.11 1271.63,317.15 1271.88,314.21 1272.12,311.28 1272.37,308.37 1272.62,305.48 1272.87,302.61 1273.11,299.75 1273.36,296.91 1273.61,294.09 1273.86,291.29 1274.10,288.51 1274.35,285.75 1274.60,283.00 1274.60,283.00 1336.50,283.00" stroke="#0000FF" fill="none"/></g></svg><div style="left:1294px;top:852px;width:51px;height:16px;background:transparent;box-sizing:border-box;border-top:1px solid #808080;border-left:1px solid #808080;border-right:1px solid #fff;border-bottom:1px solid #fff"></div><svg style="position:absolute;left:1349px;top:854px;overflow:visible" width="14" height="14" viewBox="0 0 14 14"><path d="M13 1 L1 13 M13 2 L2 13 M13 5 L5 13 M13 6 L6 13 M13 9 L9 13 M13 10 L10 13" stroke="#fff" stroke-width="1"/><path d="M13 2.5 L2.5 13 M13 6.5 L6.5 13 M13 10.5 L10.5 13" stroke="#808080" stroke-width="1.5"/></svg>
</body></html>
